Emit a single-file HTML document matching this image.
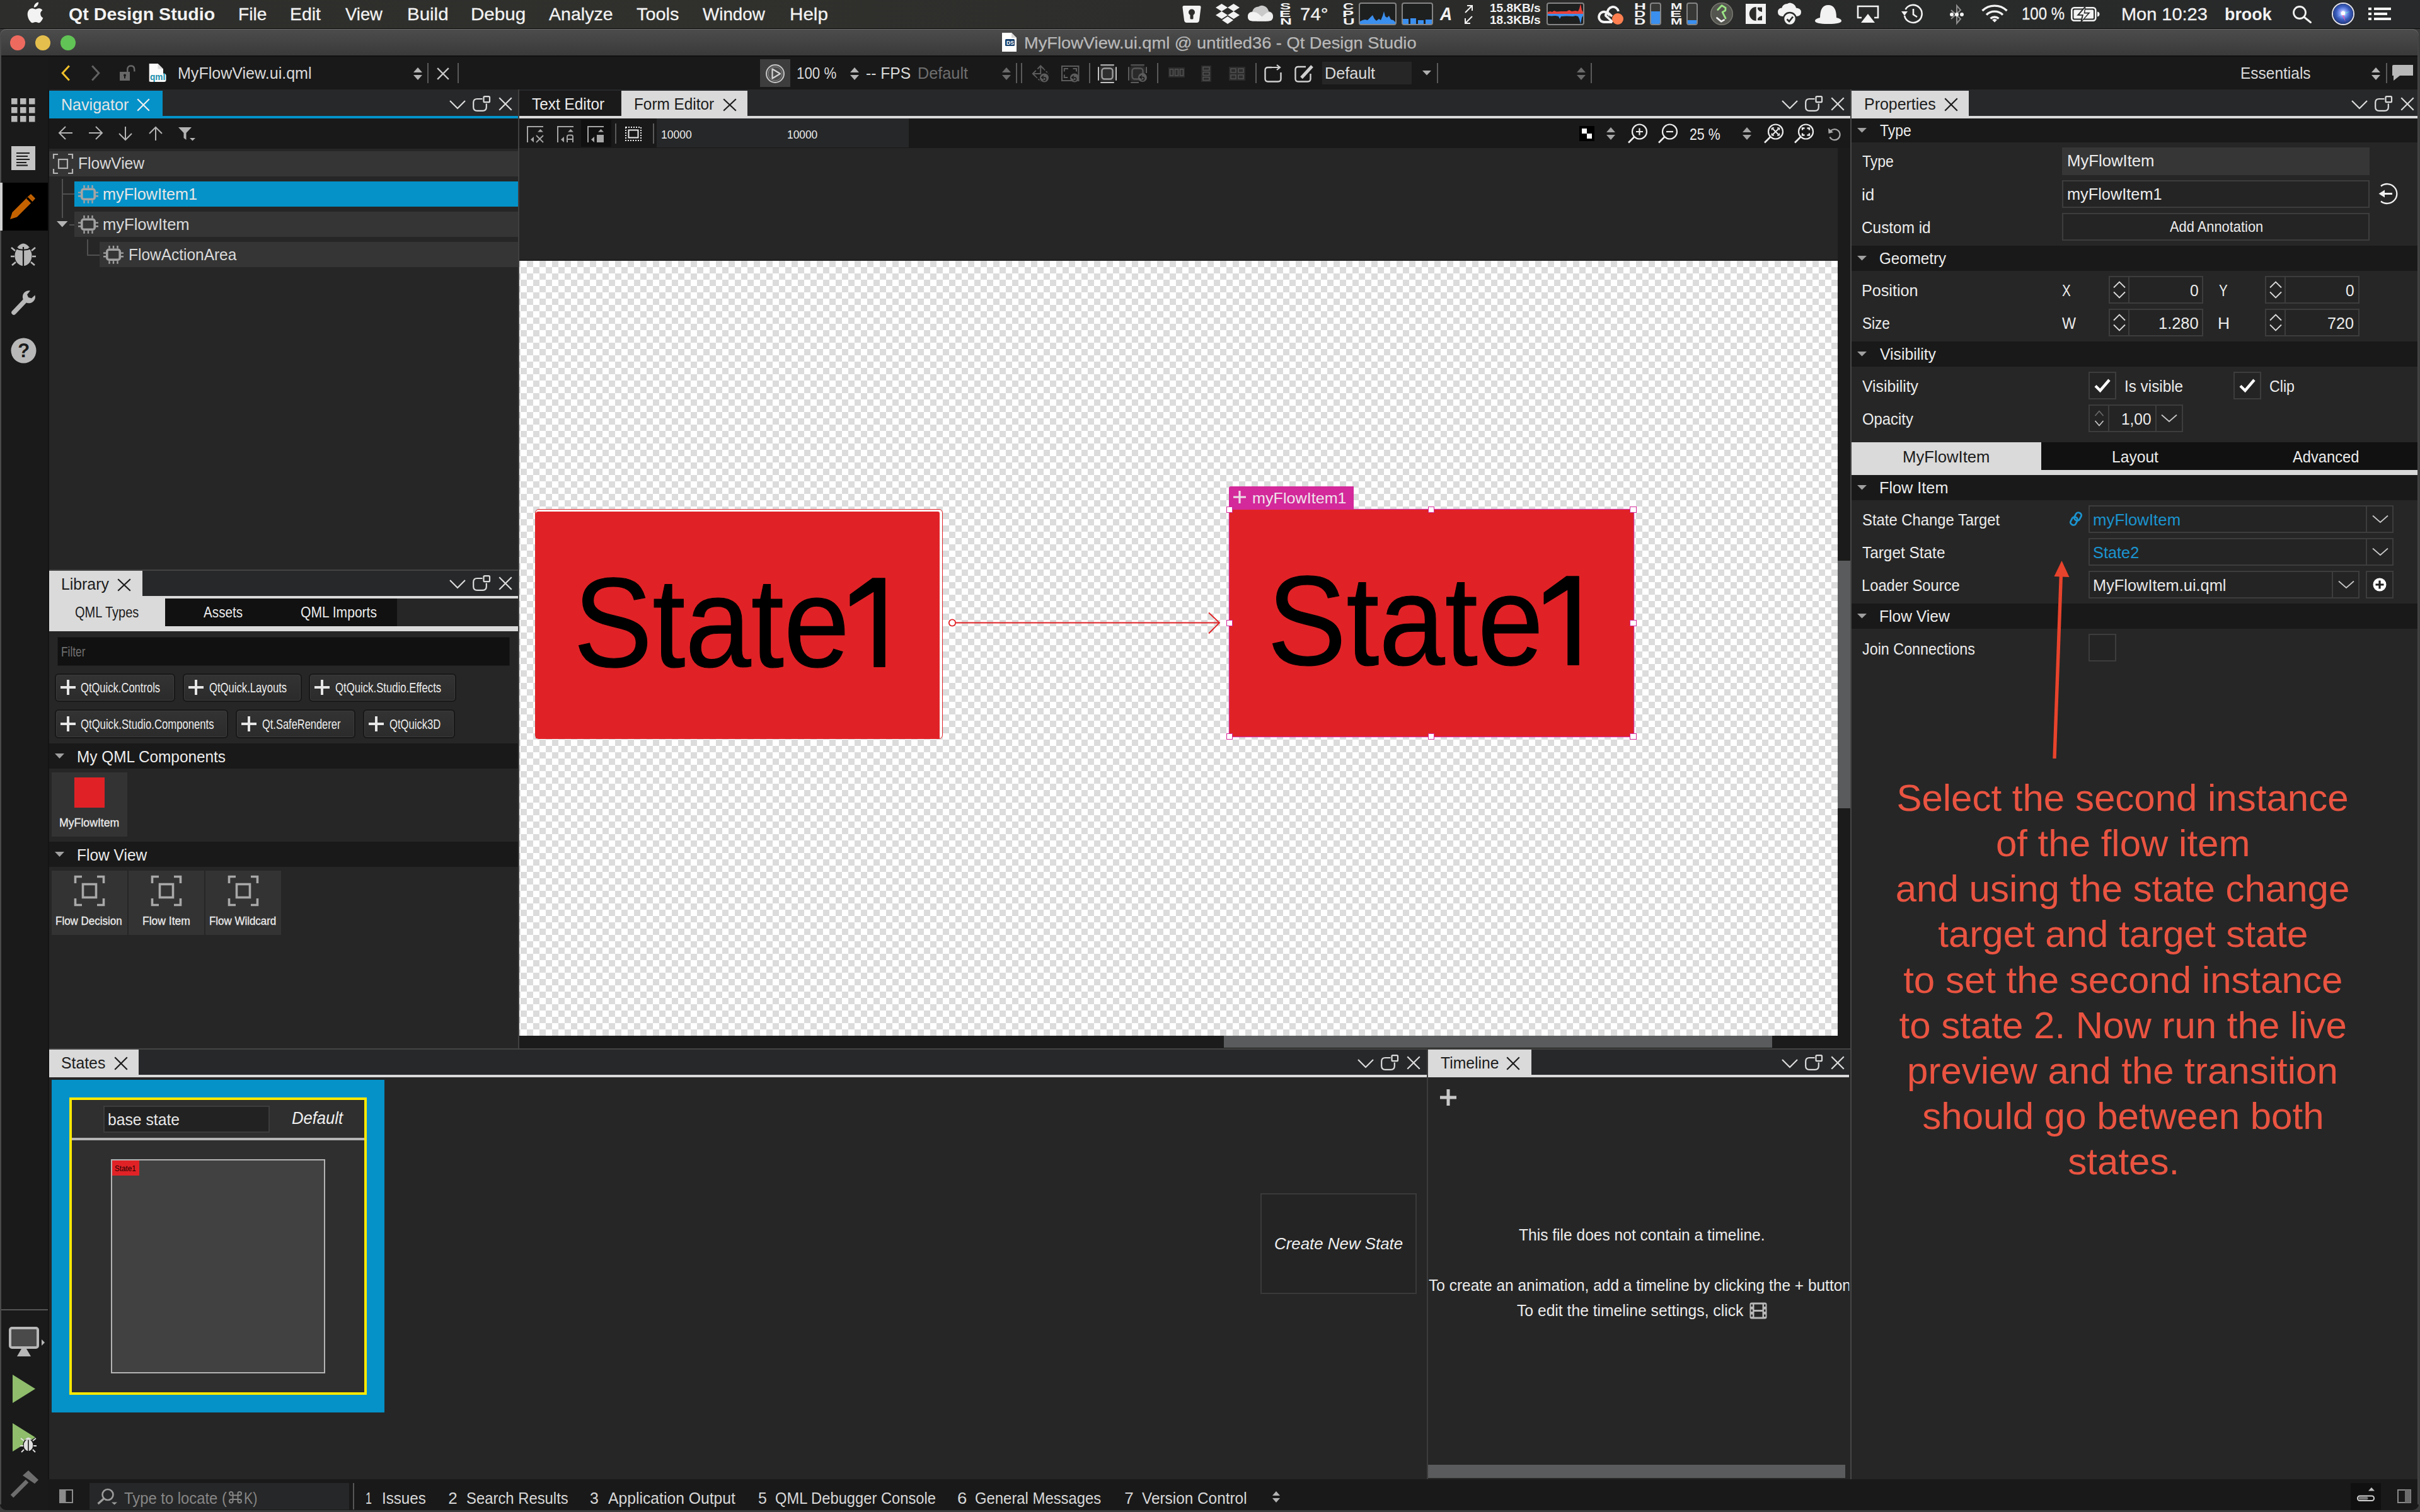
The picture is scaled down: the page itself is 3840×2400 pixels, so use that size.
<!DOCTYPE html>
<html><head><meta charset="utf-8"><title>Qt Design Studio</title>
<style>
html,body{margin:0;padding:0;background:#1b1b1b;}
body{width:3840px;height:2400px;position:relative;overflow:hidden;font-family:"Liberation Sans",sans-serif;}
div,svg,span.t{position:absolute;}
span.t{white-space:pre;display:block;}
svg{overflow:visible;}
</style></head><body>
<div style="left:0px;top:0px;width:3840px;height:2400px;background:#3c3c3c;"></div>
<div style="left:0px;top:46px;width:3838px;height:2351px;background:#262626;border-radius:10px 10px 10px 10px;"></div>
<div style="left:0px;top:0px;width:3840px;height:45px;background:linear-gradient(90deg,#2d2e2b 0%,#30312d 30%,#2b2c2a 60%,#27292a 100%);"></div>
<div style="left:0px;top:45px;width:3840px;height:1px;background:#0c0c0c;"></div>
<div style="left:0px;top:46px;width:3838px;height:43px;background:linear-gradient(180deg,#4c4c4c 0%,#454545 40%,#393939 100%);border-radius:10px 10px 0 0;box-shadow:inset 0 1px 0 #6e6e6e;"></div>
<div style="left:0px;top:88px;width:3838px;height:2px;background:#101010;"></div>
<div style="left:16px;top:56px;width:24px;height:24px;background:#ee6a5f;border-radius:50%;"></div>
<div style="left:56px;top:56px;width:24px;height:24px;background:#e5bf4d;border-radius:50%;"></div>
<div style="left:96px;top:56px;width:24px;height:24px;background:#61c355;border-radius:50%;"></div>
<div style="left:0px;top:90px;width:3838px;height:52px;background:#191919;"></div>
<div style="left:0px;top:90px;width:76px;height:2307px;background:#1a1a1a;border-radius:0 0 0 10px;"></div>
<div style="left:76px;top:142px;width:2px;height:2206px;background:#141414;"></div>
<div style="left:78px;top:142px;width:3760px;height:42px;background:#27282a;"></div>
<div style="left:76px;top:2348px;width:3762px;height:49px;background:#191919;border-radius:0 0 10px 0;"></div>
<svg style="left:42px;top:3px;" width="26" height="33" viewBox="0 0 26 33"><path d="M17.6 5.3c1.2-1.5 2-3.4 1.8-5.3-1.7.1-3.8 1.1-5 2.6-1.1 1.3-2.1 3.3-1.8 5.2 1.9.1 3.8-1 5-2.5zM22.3 17.4c0-3.6 3-5.3 3.1-5.4-1.7-2.5-4.3-2.8-5.2-2.8-2.2-.2-4.3 1.3-5.4 1.300s-2.9-1.3-4.7-1.200c-2.4 0-4.7 1.4-5.9 3.6-2.5 4.4-.600 10.9 1.8 14.4 1.2 1.7 2.6 3.7 4.5 3.6 1.8-.1 2.5-1.2 4.7-1.200s2.8 1.2 4.7 1.100c1.9 0 3.2-1.8 4.4-3.5 1.4-2 1.9-3.9 2-4-.1 0-3.9-1.5-3.9-5.900z" fill="#f2f2f2" transform="translate(-1.5,.5) scale(1.06)"/></svg>
<span class="t" style="left:108.96px;top:8.18px;font-size:28.5px;line-height:28.5px;color:#f2f2f2;transform-origin:0 0;font-weight:bold;transform:scaleX(1.0041);">Qt Design Studio</span>
<span class="t" style="left:377.85px;top:8.18px;font-size:28.5px;line-height:28.5px;color:#f2f2f2;transform-origin:0 0;transform:scaleX(0.9877);-webkit-text-stroke:0.3px #f2f2f2;">File</span>
<span class="t" style="left:459.83px;top:8.18px;font-size:28.5px;line-height:28.5px;color:#f2f2f2;transform-origin:0 0;transform:scaleX(0.9936);-webkit-text-stroke:0.3px #f2f2f2;">Edit</span>
<span class="t" style="left:547.96px;top:8.18px;font-size:28.5px;line-height:28.5px;color:#f2f2f2;transform-origin:0 0;transform:scaleX(0.9618);-webkit-text-stroke:0.3px #f2f2f2;">View</span>
<span class="t" style="left:645.74px;top:8.18px;font-size:28.5px;line-height:28.5px;color:#f2f2f2;transform-origin:0 0;transform:scaleX(1.0341);-webkit-text-stroke:0.3px #f2f2f2;">Build</span>
<span class="t" style="left:747.23px;top:8.18px;font-size:28.5px;line-height:28.5px;color:#f2f2f2;transform-origin:0 0;transform:scaleX(1.0376);-webkit-text-stroke:0.3px #f2f2f2;">Debug</span>
<span class="t" style="left:871.10px;top:8.18px;font-size:28.5px;line-height:28.5px;color:#f2f2f2;transform-origin:0 0;-webkit-text-stroke:0.3px #f2f2f2;">Analyze</span>
<span class="t" style="left:1009.52px;top:8.18px;font-size:28.5px;line-height:28.5px;color:#f2f2f2;transform-origin:0 0;transform:scaleX(1.0126);-webkit-text-stroke:0.3px #f2f2f2;">Tools</span>
<span class="t" style="left:1115.46px;top:8.18px;font-size:28.5px;line-height:28.5px;color:#f2f2f2;transform-origin:0 0;transform:scaleX(0.9752);-webkit-text-stroke:0.3px #f2f2f2;">Window</span>
<span class="t" style="left:1252.73px;top:8.18px;font-size:28.5px;line-height:28.5px;color:#f2f2f2;transform-origin:0 0;transform:scaleX(1.0390);-webkit-text-stroke:0.3px #f2f2f2;">Help</span>
<svg style="left:1876px;top:9px;" width="30" height="27" viewBox="0 0 30 27"><path d="M3 0H27Q30 0 29.5 3L27 23Q26.5 27 23 27H7Q3.5 27 3 23L.5 3Q0 0 3 0Z" fill="#f2f2f2"/><circle cx="15" cy="10.5" r="5" fill="#2c2d2a"/><rect x="12.5" y="12" width="5" height="9.5" rx="1.5" fill="#2c2d2a"/></svg>
<svg style="left:1929px;top:6px;" width="38" height="33" viewBox="0 0 38 33"><g fill="#f2f2f2"><path d="M9.5 0L19 6L9.5 12L0 6Z"/><path d="M28.5 0L38 6L28.5 12L19 6Z"/><path d="M9.5 12L19 18L9.5 24L0 18Z"/><path d="M28.5 12L38 18L28.5 24L19 18Z"/><path d="M19 20L28 26L19 32L10 26Z"/></g></svg>
<svg style="left:1980px;top:8px;" width="40" height="26" viewBox="0 0 40 26"><path d="M8 25.500Q0 25.5 0 18Q0 11 7 10.500Q9 3 17 2.500Q22 -1 28 2.500Q32 5 33 10Q40 11 40 18Q40 25.5 32 25.500Z" fill="#c9c9c9"/><path d="M8 25.500Q0 25.5 0 18.500Q0 13 5.5 11.500Q12 9.5 17 14L30 25.500Z" fill="#f2f2f2"/><path d="M14 25.500L29 13Q34 9.5 38 13.500Q40 16 40 18Q40 25.5 32 25.500Z" fill="#ededed"/></svg>
<span class="t" style="left:2031.47px;top:1.83px;font-size:15.5px;line-height:15.5px;color:#f2f2f2;transform-origin:0 0;font-weight:bold;transform:scaleX(1.6667);">S</span>
<span class="t" style="left:2030.47px;top:13.83px;font-size:15.5px;line-height:15.5px;color:#f2f2f2;transform-origin:0 0;font-weight:bold;transform:scaleX(1.7699);">E</span>
<span class="t" style="left:2030.54px;top:25.83px;font-size:15.5px;line-height:15.5px;color:#f2f2f2;transform-origin:0 0;font-weight:bold;transform:scaleX(1.6949);">N</span>
<span class="t" style="left:2063.12px;top:7.68px;font-size:28.5px;line-height:28.5px;color:#f2f2f2;transform-origin:0 0;transform:scaleX(1.0351);-webkit-text-stroke:0.3px #f2f2f2;">74°</span>
<span class="t" style="left:2131.30px;top:1.83px;font-size:15.5px;line-height:15.5px;color:#f2f2f2;transform-origin:0 0;font-weight:bold;transform:scaleX(1.5267);">C</span>
<span class="t" style="left:2130.48px;top:13.83px;font-size:15.5px;line-height:15.5px;color:#f2f2f2;transform-origin:0 0;font-weight:bold;transform:scaleX(1.7544);">P</span>
<span class="t" style="left:2130.70px;top:25.83px;font-size:15.5px;line-height:15.5px;color:#f2f2f2;transform-origin:0 0;font-weight:bold;transform:scaleX(1.6667);">U</span>
<div style="left:2156px;top:4px;width:60px;height:36px;background:#1e1f1f;border:2px solid #858585;border-radius:4px;box-sizing:border-box;"></div>
<svg style="left:2158px;top:6px;" width="56" height="32" viewBox="0 0 56 32"><path d="M0 32V28L4 26L8 25L12 26L16 22L20 18L23 24L26 27L30 24L33 26L36 19L38 12L40 20L43 22L46 19L49 25L53 26L56 29V32Z" fill="#3b8fee"/></svg>
<div style="left:2224px;top:4px;width:50px;height:36px;background:#1e1f1f;border:2px solid #858585;border-radius:4px;box-sizing:border-box;"></div>
<svg style="left:2226px;top:6px;" width="46" height="32" viewBox="0 0 46 32"><path d="M0 32V24H9V32ZM12 32V23H21V32ZM24 32V26H33V32ZM36 32V25H46V32Z" fill="#3b8fee"/></svg>
<span class="t" style="left:2285.13px;top:7.75px;font-size:29px;line-height:29px;color:#f2f2f2;transform-origin:0 0;font-weight:bold;font-style:italic;transform:scaleX(0.9161);">A</span>
<svg style="left:2324px;top:8px;" width="14" height="30" viewBox="0 0 14 30"><path d="M1 12L12 1M4 1H12V9" stroke="#f2f2f2" stroke-width="2" fill="none"/><path d="M12 18L1 29M9 29H1V21" stroke="#f2f2f2" stroke-width="2" fill="none"/></svg>
<span class="t" style="left:2364.45px;top:4.53px;font-size:17.5px;line-height:17.5px;color:#f2f2f2;transform-origin:0 0;font-weight:bold;transform:scaleX(1.0916);">15.8KB/s</span>
<span class="t" style="left:2364.45px;top:23.52px;font-size:17.5px;line-height:17.5px;color:#f2f2f2;transform-origin:0 0;font-weight:bold;transform:scaleX(1.0916);">18.3KB/s</span>
<div style="left:2454px;top:4px;width:60px;height:36px;background:#1e1f1f;border:2px solid #858585;border-radius:4px;box-sizing:border-box;"></div>
<svg style="left:2456px;top:6px;" width="56" height="32" viewBox="0 0 56 32"><path d="M0 16V13L4 12L7 13L10 11L14 12.500L20 12L30 12L34 10L38 12L44 11L48 12L50 8L52 0L54 10L56 13V16Z" fill="#e8423a"/><path d="M0 16V19L6 19.500L12 19L17 20L19 24L21 20L30 19.500L40 20L44 19L48 20L50 24L52 32L54 22L56 19V16Z" fill="#3b8fee"/></svg>
<svg style="left:2535px;top:8px;" width="44" height="32" viewBox="0 0 44 32"><path d="M23 27H10A8.1 8.1 0 1 1 16 13.2A7 7 0 0 1 33 10" stroke="#f2f2f2" stroke-width="3.8" fill="none"/><path d="M24 27L13 17A3.2 3.2 0 0 1 18 13.5L23 18" stroke="#f2f2f2" stroke-width="3.6" fill="none"/><circle cx="32" cy="22" r="9" fill="#ff7f50"/></svg>
<span class="t" style="left:2592.54px;top:1.83px;font-size:15.5px;line-height:15.5px;color:#f2f2f2;transform-origin:0 0;font-weight:bold;transform:scaleX(1.6949);">H</span>
<span class="t" style="left:2592.61px;top:13.83px;font-size:15.5px;line-height:15.5px;color:#f2f2f2;transform-origin:0 0;font-weight:bold;transform:scaleX(1.6260);">D</span>
<span class="t" style="left:2592.61px;top:25.83px;font-size:15.5px;line-height:15.5px;color:#f2f2f2;transform-origin:0 0;font-weight:bold;transform:scaleX(1.6260);">D</span>
<div style="left:2618px;top:4px;width:18px;height:36px;background:#383937;border:2px solid #858585;border-radius:4px;box-sizing:border-box;"></div>
<div style="left:2620px;top:18px;width:14px;height:20px;background:#3b8fee;border-radius:0 0 2px 2px;"></div>
<span class="t" style="left:2650.81px;top:1.83px;font-size:15.5px;line-height:15.5px;color:#f2f2f2;transform-origin:0 0;font-weight:bold;transform:scaleX(1.4286);">M</span>
<span class="t" style="left:2650.47px;top:13.83px;font-size:15.5px;line-height:15.5px;color:#f2f2f2;transform-origin:0 0;font-weight:bold;transform:scaleX(1.7699);">E</span>
<span class="t" style="left:2650.81px;top:25.83px;font-size:15.5px;line-height:15.5px;color:#f2f2f2;transform-origin:0 0;font-weight:bold;transform:scaleX(1.4286);">M</span>
<div style="left:2676px;top:4px;width:18px;height:36px;background:#383937;border:2px solid #858585;border-radius:4px;box-sizing:border-box;"></div>
<div style="left:2678px;top:32px;width:14px;height:6px;background:#3b8fee;border-radius:0 0 2px 2px;"></div>
<div style="left:2714px;top:4px;width:36px;height:36px;background:#555550;border-radius:50%;box-shadow:inset 0 0 0 1.500px #77776f;"></div>
<svg style="left:2714px;top:4px;" width="36" height="36" viewBox="0 0 36 36"><path d="M11.7 11.5L18.1 4.7L24.1 8.4L23.8 12.7L19.1 15.2L24.1 25.1" stroke="#9be585" stroke-width="2.8" fill="none" stroke-linecap="round" stroke-linejoin="round"/><path d="M10.5 24.5L17.3 30.1L21.6 27.6" stroke="#f2f2f2" stroke-width="2.8" fill="none" stroke-linecap="round" stroke-linejoin="round"/></svg>
<div style="left:2770px;top:6px;width:32px;height:32px;background:#f2f2f2;"></div>
<svg style="left:2770px;top:6px;" width="32" height="32" viewBox="0 0 32 32"><path d="M16.7 5.1V26.9A10.9 10.9 0 0 1 16.7 5.1Z" fill="#2c2d2b"/><path d="M19 5.8H26V13Q21 12 19 8.5ZM19 26.2H26V19Q21 20 19 23.5Z" fill="#2c2d2b"/></svg>
<svg style="left:2821px;top:4px;" width="38" height="37" viewBox="0 0 38 37"><path d="M8 22Q0 22 0 15Q0 9 6.5 8.500Q8 2 15 2Q19 -1 24 2Q28 4 29 8.500Q37 9 37 15.500Q37 22 29 22Z" fill="#f2f2f2"/><circle cx="19" cy="26" r="10" fill="#f2f2f2" stroke="#2a2b2b" stroke-width="2.5"/><path d="M14.5 26.500L18 30L24 22.5" stroke="#2a2b2b" stroke-width="2.8" fill="none"/></svg>
<svg style="left:2880px;top:8px;" width="42" height="30" viewBox="0 0 42 30"><path d="M8 20Q8 0 21 0Q34 0 34 20Q42 22 42 25Q42 30 21 30Q0 30 0 25Q0 22 8 20Z" fill="#f2f2f2"/></svg>
<svg style="left:2946px;top:8px;" width="36" height="28" viewBox="0 0 36 28"><path d="M8 20H2V2H34V20H28" stroke="#f2f2f2" stroke-width="2.6" fill="none"/><path d="M18 14L29 28H7Z" fill="#f2f2f2"/></svg>
<svg style="left:3017px;top:6px;" width="36" height="32" viewBox="0 0 36 32"><path d="M6.5 9A14 14 0 1 1 5 19" stroke="#f2f2f2" stroke-width="2.6" fill="none"/><path d="M0 12H10L5 19Z" fill="#f2f2f2"/><path d="M19 8V17L25 21" stroke="#f2f2f2" stroke-width="2.6" fill="none"/></svg>
<svg style="left:3094px;top:7px;" width="22" height="32" viewBox="0 0 22 32"><path d="M2 9L17 23L11 30V2L17 9L2 23" stroke="#8e8e8e" stroke-width="2" fill="none"/><circle cx="3" cy="16" r="3" fill="#f2f2f2"/><circle cx="11" cy="16" r="3" fill="#f2f2f2"/><circle cx="19" cy="16" r="3" fill="#f2f2f2"/></svg>
<svg style="left:3144px;top:7px;" width="42" height="29" viewBox="0 0 42 29"><g fill="none" stroke="#f2f2f2" stroke-width="3.4"><path d="M1.5 10A28 28 0 0 1 40.5 10"/><path d="M8 16.500A18.5 18.5 0 0 1 34 16.5"/><path d="M14.5 22.500A9.5 9.5 0 0 1 27.5 22.5"/></g><path d="M21 28.500L17 24.500Q21 21.5 25 24.500Z" fill="#f2f2f2"/></svg>
<span class="t" style="left:3207.80px;top:7.18px;font-size:28.5px;line-height:28.5px;color:#f2f2f2;transform-origin:0 0;transform:scaleX(0.8408);-webkit-text-stroke:0.3px #f2f2f2;">100 %</span>
<svg style="left:3286px;top:11px;" width="46" height="23" viewBox="0 0 46 23"><rect x="1.3" y="1.3" width="38" height="20.4" rx="4" stroke="#f2f2f2" stroke-width="2.6" fill="none"/><path d="M42 7.500Q45.5 8 45.5 11.500Q45.5 15 42 15.500Z" fill="#f2f2f2"/><rect x="4.5" y="4.5" width="31.5" height="14" rx="1.5" fill="#f2f2f2"/><path d="M22 1L12 12.500H19L17 22L28 10H21Z" fill="#2a2b2b" stroke="#2a2b2b" stroke-width="2.5"/><path d="M22 2L13.5 12H20L18 21L27 10.500H20.500Z" fill="#f2f2f2"/></svg>
<span class="t" style="left:3365.78px;top:7.68px;font-size:28.5px;line-height:28.5px;color:#f2f2f2;transform-origin:0 0;transform:scaleX(1.0157);-webkit-text-stroke:0.3px #f2f2f2;">Mon 10:23</span>
<span class="t" style="left:3530.35px;top:7.68px;font-size:28.5px;line-height:28.5px;color:#f2f2f2;transform-origin:0 0;font-weight:bold;transform:scaleX(0.9426);">brook</span>
<svg style="left:3638px;top:9px;" width="30" height="28" viewBox="0 0 30 28"><circle cx="11" cy="11" r="9.5" stroke="#f2f2f2" stroke-width="2.8" fill="none"/><path d="M18 18L28.5 26.5" stroke="#f2f2f2" stroke-width="3" stroke-linecap="round"/></svg>
<div style="left:3702px;top:6px;width:32px;height:32px;background:radial-gradient(circle at 50% 46%,#ffffff 0%,#e4ecff 9%,#7f9af2 24%,#3b5fc0 46%,#27408c 68%,#1c2c60 100%);border-radius:50%;box-shadow:0 0 0 2px #e4e4ec;"></div>
<svg style="left:3702px;top:6px;" width="32" height="32" viewBox="0 0 32 32"><path d="M16 15L27 12L17 17Z" fill="#62f0d4" opacity=".8"/><path d="M16 15L20 29L14 17Z" fill="#ff4fa8" opacity=".85"/><path d="M16 15L6 7L15 13Z" fill="#c86cf0" opacity=".8"/><path d="M16 15L5 21L15 17Z" fill="#8fd0ff" opacity=".55"/><circle cx="16" cy="15" r="3.2" fill="#ffffff"/></svg>
<svg style="left:3758px;top:12px;" width="36" height="20" viewBox="0 0 36 20"><path d="M0 0H5V4H0ZM9 0H36V4H9ZM0 8H5V12H0ZM9 8H30V12H9ZM0 16H5V20H0ZM9 16H36V20H9Z" fill="#f2f2f2"/></svg>
<svg style="left:1590px;top:52px;" width="24" height="30" viewBox="0 0 24 30"><path d="M0 0H15L23 8V30H0Z" fill="#ffffff"/><path d="M15 0V8H23Z" fill="#d8d8d8"/><rect x="5" y="10" width="15" height="11" rx="1.5" fill="#17406d"/></svg>
<span class="t" style="left:1596.94px;top:63.32px;font-size:9.5px;line-height:9.5px;color:#ffffff;transform-origin:0 0;font-weight:bold;transform:scaleX(0.9011);">DS</span>
<span class="t" style="left:1625.42px;top:55.30px;font-size:26px;line-height:26px;color:#b9b9b9;transform-origin:0 0;transform:scaleX(1.0484);-webkit-text-stroke:0.25px #b9b9b9;">MyFlowView.ui.qml @ untitled36 - Qt Design Studio</span>
<svg style="left:96px;top:103px;" width="16" height="27" viewBox="0 0 16 27"><path d="M13.8 1.4L3.2 13L13.8 24.6" stroke="#f1c12b" stroke-width="3" fill="none"/></svg>
<svg style="left:144px;top:103px;" width="16" height="27" viewBox="0 0 16 27"><path d="M2.2 1.4L12.8 13L2.2 24.6" stroke="#626262" stroke-width="3" fill="none"/></svg>
<svg style="left:190px;top:103px;" width="25" height="26" viewBox="0 0 25 26"><rect x="0" y="11" width="16" height="14" fill="#686868"/><path d="M12.3 11V7.5Q12.3 1.5 17.8 1.5Q23.3 1.5 23.3 7.5V10.5" stroke="#686868" stroke-width="2.4" fill="none"/><circle cx="8" cy="16.5" r="2" fill="#191919"/><rect x="7" y="17" width="2" height="4.5" fill="#191919"/></svg>
<svg style="left:236px;top:100px;" width="28" height="31" viewBox="0 0 28 31"><path d="M0.7 1H14.5L23 9.5V29.6H0.7Z" fill="#fbfbfb"/><path d="M14.5 1V9.5H23Z" fill="#dcdcdc"/><rect x="1" y="17" width="26.5" height="13" rx="3" fill="#fbfbfb"/></svg>
<span class="t" style="left:238.05px;top:115.11px;font-size:14.7px;line-height:14.7px;color:#1b8fae;transform-origin:0 0;font-weight:bold;transform:scaleX(0.9288);">qml</span>
<span class="t" style="left:281.60px;top:103.30px;font-size:26px;line-height:26px;color:#dadada;transform-origin:0 0;transform:scaleX(0.9635);">MyFlowView.ui.qml</span>
<svg style="left:655.5px;top:106.5px;" width="14" height="20" viewBox="0 0 14 20"><path d="M0 8L7.0 0L14 8Z M0 12H14L7.0 20Z" fill="#b4b4b4"/></svg>
<div style="left:678px;top:100px;width:2px;height:32px;background:#5a5a5a;"></div>
<svg style="left:694px;top:108px;" width="18" height="18" viewBox="0 0 18 18"><path d="M1 1L17 17M17 1L1 17" stroke="#c8c8c8" stroke-width="2.4" fill="none" stroke-linecap="square"/></svg>
<div style="left:726px;top:100px;width:2px;height:32px;background:#5a5a5a;"></div>
<div style="left:1206px;top:94px;width:48px;height:44px;background:#3d3d3d;"></div>
<svg style="left:1214px;top:101px;" width="32" height="32" viewBox="0 0 32 32"><circle cx="16" cy="16" r="14" stroke="#c4c4c4" stroke-width="2" fill="#4c4c4c"/><circle cx="16" cy="16" r="11" stroke="#8a8a8a" stroke-width="1" fill="none"/><path d="M11.5 8.500L24 16L11.5 23.500Z" fill="none" stroke="#d4d4d4" stroke-width="2.2" stroke-linejoin="round"/></svg>
<span class="t" style="left:1264.43px;top:103.30px;font-size:26px;line-height:26px;color:#dadada;transform-origin:0 0;transform:scaleX(0.8582);">100 %</span>
<svg style="left:1349.0px;top:106.5px;" width="14" height="20" viewBox="0 0 14 20"><path d="M0 8L7.0 0L14 8Z M0 12H14L7.0 20Z" fill="#b4b4b4"/></svg>
<span class="t" style="left:1374.49px;top:103.30px;font-size:26px;line-height:26px;color:#dadada;transform-origin:0 0;transform:scaleX(0.9467);">-- FPS</span>
<span class="t" style="left:1455.58px;top:103.30px;font-size:26px;line-height:26px;color:#6e6e6e;transform-origin:0 0;transform:scaleX(0.9715);">Default</span>
<svg style="left:1589.5px;top:106.5px;" width="14" height="20" viewBox="0 0 14 20"><path d="M0 8L7.0 0L14 8Z M0 12H14L7.0 20Z" fill="#6a6a6a"/></svg>
<div style="left:1612px;top:100px;width:2px;height:32px;background:#5a5a5a;"></div>
<div style="left:1620px;top:100px;width:2px;height:32px;background:#5a5a5a;"></div>
<div style="left:1728px;top:100px;width:2px;height:32px;background:#5a5a5a;"></div>
<div style="left:1836px;top:100px;width:2px;height:32px;background:#5a5a5a;"></div>
<div style="left:1992px;top:100px;width:2px;height:32px;background:#5a5a5a;"></div>
<div style="left:2280px;top:100px;width:2px;height:32px;background:#5a5a5a;"></div>
<div style="left:2524px;top:100px;width:2px;height:32px;background:#5a5a5a;"></div>
<svg style="left:1638px;top:102px;" width="28" height="30" viewBox="0 0 28 30"><path d="M13.2 2.5V14.9H0.8M8.3 7.5L13.2 2.5L18.2 7.5M5.8 10L0.8 14.9L5.8 19.9" stroke="#5c5c5c" stroke-width="2" fill="none"/><path d="M18.2 7.5L25.6 14.9M5.8 19.9L13.2 27.3" stroke="#5c5c5c" stroke-width="1.6" stroke-dasharray="3 2" fill="none"/><circle cx="19" cy="21.5" r="7" fill="#5c5c5c"/><path d="M15.8 21.0H20.2A2.6 2.6 0 0 1 20.2 25.7H17.5" stroke="#191919" stroke-width="1.5" fill="none"/><path d="M18 18.3L14.8 21.0L18 23.7" stroke="#191919" stroke-width="1.5" fill="none"/></svg>
<svg style="left:1684px;top:104px;" width="29" height="28" viewBox="0 0 29 28"><rect x="1" y="1" width="26.5" height="23" stroke="#5c5c5c" stroke-width="2" fill="none"/><path d="M4.8 9.6V4.9H11M18.5 4.9H24V9.6M4.8 14.6V19H10.2" stroke="#5c5c5c" stroke-width="2" fill="none"/><circle cx="21" cy="19.5" r="7" fill="#5c5c5c"/><path d="M17.8 19.0H22.2A2.6 2.6 0 0 1 22.2 23.7H19.5" stroke="#191919" stroke-width="1.5" fill="none"/><path d="M20 16.3L16.8 19.0L20 21.7" stroke="#191919" stroke-width="1.5" fill="none"/></svg>
<svg style="left:1742px;top:102px;" width="30" height="30" viewBox="0 0 30 30"><rect x="3" y="3" width="24" height="24" rx="4" fill="#2e2e2e"/><path d="M4.3 1.2H25.8M4.3 29H25.8" stroke="#c4c4c4" stroke-width="2"/><path d="M1 4.2V25.7M29 4.2V25.7" stroke="#c4c4c4" stroke-width="2"/><rect x="6.5" y="6.5" width="17" height="17" rx="4" stroke="#9c9c9c" stroke-width="2.4" fill="none"/></svg>
<svg style="left:1790px;top:102px;" width="32" height="30" viewBox="0 0 32 30"><rect x="3" y="3" width="24" height="24" rx="4" fill="#2a2a2a"/><path d="M4.3 1.2H25.8M4.3 29H17" stroke="#5c5c5c" stroke-width="2"/><path d="M1 4.2V25.7M29 4.2V14" stroke="#5c5c5c" stroke-width="2"/><rect x="6.5" y="6.5" width="17" height="17" rx="4" stroke="#555" stroke-width="2.4" fill="none"/><circle cx="22.9" cy="21" r="7" fill="#5c5c5c"/><path d="M19.7 20.5H24.099999999999998A2.6 2.6 0 0 1 24.099999999999998 25.2H21.4" stroke="#191919" stroke-width="1.5" fill="none"/><path d="M21.9 17.8L18.7 20.5L21.9 23.2" stroke="#191919" stroke-width="1.5" fill="none"/></svg>
<svg style="left:1854px;top:107px;" width="26" height="16" viewBox="0 0 26 16"><rect width="26" height="16" fill="#2c2c2c"/><path d="M2.5 3H7.500V13H2.500ZM10.5 3H15.500V13H10.500ZM18.5 3H23.500V13H18.500Z" stroke="#525252" stroke-width="1.5" fill="none"/></svg>
<svg style="left:1906px;top:104px;" width="16" height="26" viewBox="0 0 16 26"><rect width="16" height="26" fill="#2c2c2c"/><path d="M3 2.500H13V7.500H3ZM3 10.500H13V15.500H3ZM3 18.500H13V23.500H3Z" stroke="#525252" stroke-width="1.5" fill="none"/></svg>
<svg style="left:1950px;top:106px;" width="26" height="22" viewBox="0 0 26 22"><rect width="26" height="22" fill="#2c2c2c"/><path d="M3 3H11V9H3ZM15 3H23V9H15ZM3 13H11V19H3ZM15 13H23V19H15Z" stroke="#525252" stroke-width="1.5" fill="none"/></svg>
<svg style="left:2006px;top:102px;" width="29" height="29" viewBox="0 0 29 29"><path d="M12 5H6Q1.5 5 1.5 9.500V23Q1.5 27.5 6 27.500H22Q26.5 27.5 26.5 23V13" stroke="#d0d0d0" stroke-width="2.4" fill="none"/><path d="M5 5H25M20 1L25 5L20 9" stroke="#d0d0d0" stroke-width="2.2" fill="none"/></svg>
<svg style="left:2054px;top:102px;" width="31" height="29" viewBox="0 0 31 29"><path d="M18 4H6Q1.5 4 1.5 8.500V23Q1.5 27.5 6 27.500H21Q25.5 27.5 25.5 23V15" stroke="#d0d0d0" stroke-width="2.4" fill="none"/><path d="M11 21.500L28 3" stroke="#d0d0d0" stroke-width="5"/></svg>
<div style="left:2098px;top:98px;width:142px;height:36px;background:#262626;"></div>
<span class="t" style="left:2101.58px;top:103.30px;font-size:26px;line-height:26px;color:#dadada;transform-origin:0 0;transform:scaleX(0.9715);">Default</span>
<svg style="left:2257px;top:112px;" width="14" height="7.5" viewBox="0 0 14 7.5"><path d="M0 0H14L7.0 7.5Z" fill="#b0b0b0"/></svg>
<svg style="left:2501.5px;top:106.5px;" width="14" height="20" viewBox="0 0 14 20"><path d="M0 8L7.0 0L14 8Z M0 12H14L7.0 20Z" fill="#6a6a6a"/></svg>
<span class="t" style="left:3554.64px;top:103.30px;font-size:26px;line-height:26px;color:#dadada;transform-origin:0 0;transform:scaleX(0.9414);">Essentials</span>
<svg style="left:3763.0px;top:106.5px;" width="14" height="20" viewBox="0 0 14 20"><path d="M0 8L7.0 0L14 8Z M0 12H14L7.0 20Z" fill="#b4b4b4"/></svg>
<div style="left:3786px;top:100px;width:2px;height:32px;background:#5a5a5a;"></div>
<svg style="left:3796px;top:103px;" width="33" height="26" viewBox="0 0 33 26"><path d="M2 0H33V17H12L2 25V17H0V2Q0 0 2 0Z" fill="#b8b8b8"/></svg>
<div style="left:78px;top:144px;width:180px;height:40px;background:#0492c9;"></div>
<div style="left:78px;top:184px;width:744px;height:4px;background:#0492c9;"></div>
<span class="t" style="left:96.59px;top:153.30px;font-size:26px;line-height:26px;color:#e4e4e4;transform-origin:0 0;transform:scaleX(0.9643);">Navigator</span>
<svg style="left:218px;top:157px;" width="19" height="19" viewBox="0 0 19 19"><path d="M1 1L18 18M18 1L1 18" stroke="#f0f0f0" stroke-width="2.2" fill="none" stroke-linecap="square"/></svg>
<svg style="left:713px;top:159px;" width="26" height="14" viewBox="0 0 26 14"><path d="M1 1L13.0 13L25 1" stroke="#dcdcdc" stroke-width="2.2" fill="none"/></svg>
<svg style="left:750px;top:152px;" width="29" height="25" viewBox="0 0 29 25"><path d="M15.5 5H7Q1.2 5 1.2 11V18Q1.2 23.8 7 23.8H16Q21.8 23.8 21.8 18V12.5" stroke="#dcdcdc" stroke-width="2.2" fill="none"/><rect x="17.5" y="1.2" width="9.5" height="9" rx="1.5" stroke="#dcdcdc" stroke-width="2.2" fill="none"/></svg>
<svg style="left:792px;top:155px;" width="20" height="20" viewBox="0 0 20 20"><path d="M1 1L19 19M19 1L1 19" stroke="#dcdcdc" stroke-width="2.2" fill="none" stroke-linecap="square"/></svg>
<div style="left:78px;top:188px;width:744px;height:48px;background:#191919;"></div>
<svg style="left:92px;top:199px;" width="24" height="24" viewBox="0 0 24 24"><path d="M23 12H2M12 2L2 12L12 22" stroke="#b4b4b4" stroke-width="2" fill="none"/></svg>
<svg style="left:140px;top:199px;" width="24" height="24" viewBox="0 0 24 24"><path d="M1 12H22M12 2L22 12L12 22" stroke="#b4b4b4" stroke-width="2" fill="none"/></svg>
<svg style="left:187px;top:200px;" width="24" height="24" viewBox="0 0 24 24"><path d="M12 1V22M2 12L12 22L22 12" stroke="#b4b4b4" stroke-width="2" fill="none"/></svg>
<svg style="left:235px;top:200px;" width="24" height="24" viewBox="0 0 24 24"><path d="M12 23V2M2 12L12 2L22 12" stroke="#b4b4b4" stroke-width="2" fill="none"/></svg>
<svg style="left:283px;top:202px;" width="28" height="22" viewBox="0 0 28 22"><path d="M0 0H21L12.5 9V20L8.5 17V9Z" fill="#b4b4b4"/><path d="M18 17H27L22.5 21.5Z" fill="#b4b4b4"/></svg>
<div style="left:78px;top:240px;width:744px;height:40px;background:#353535;"></div>
<div style="left:118px;top:288px;width:704px;height:40px;background:#0492c9;"></div>
<div style="left:118px;top:336px;width:704px;height:40px;background:#353535;"></div>
<div style="left:158px;top:384px;width:664px;height:40px;background:#353535;"></div>
<svg style="left:84px;top:244px;" width="32" height="32" viewBox="0 0 32 32"><g transform="scale(1.0)" stroke="#b4b4b4" stroke-width="2.2" fill="none"><path d="M1 8V1H8M24 1H31V8M31 24V31H24M8 31H1V24"/><rect x="9" y="9" width="14" height="14"/></g></svg>
<span class="t" style="left:123.63px;top:246.00px;font-size:26px;line-height:26px;color:#dadada;transform-origin:0 0;transform:scaleX(0.9494);">FlowView</span>
<svg style="left:124px;top:294px;" width="32" height="29" viewBox="0 0 32 29"><rect x="5.8" y="6.3" width="20.4" height="15.9" rx="3" stroke="#a4a4a4" stroke-width="3.6" fill="none"/><path d="M9.5 0V4.5M16 0V4.5M22.5 0V4.5M9.5 24.2V28.7M16 24.2V28.7M22.5 24.2V28.7M0 11.6H4M0 17.2H4M28 11.6H32M28 17.2H32" stroke="#a4a4a4" stroke-width="2.4"/></svg>
<span class="t" style="left:163.46px;top:294.50px;font-size:26px;line-height:26px;color:#e6e6e6;transform-origin:0 0;transform:scaleX(0.9709);">myFlowItem1</span>
<svg style="left:124px;top:342px;" width="32" height="29" viewBox="0 0 32 29"><rect x="5.8" y="6.3" width="20.4" height="15.9" rx="3" stroke="#a0a0a0" stroke-width="3.6" fill="none"/><path d="M9.5 0V4.5M16 0V4.5M22.5 0V4.5M9.5 24.2V28.7M16 24.2V28.7M22.5 24.2V28.7M0 11.6H4M0 17.2H4M28 11.6H32M28 17.2H32" stroke="#a0a0a0" stroke-width="2.4"/></svg>
<span class="t" style="left:163.44px;top:342.50px;font-size:26px;line-height:26px;color:#dadada;transform-origin:0 0;transform:scaleX(0.9820);">myFlowItem</span>
<svg style="left:164px;top:390px;" width="32" height="29" viewBox="0 0 32 29"><rect x="5.8" y="6.3" width="20.4" height="15.9" rx="3" stroke="#a0a0a0" stroke-width="3.6" fill="none"/><path d="M9.5 0V4.5M16 0V4.5M22.5 0V4.5M9.5 24.2V28.7M16 24.2V28.7M22.5 24.2V28.7M0 11.6H4M0 17.2H4M28 11.6H32M28 17.2H32" stroke="#a0a0a0" stroke-width="2.4"/></svg>
<span class="t" style="left:203.64px;top:390.50px;font-size:26px;line-height:26px;color:#dadada;transform-origin:0 0;transform:scaleX(0.9410);">FlowActionArea</span>
<div style="left:98px;top:284px;width:2px;height:62px;background:#505050;"></div>
<div style="left:98px;top:307px;width:20px;height:2px;background:#505050;"></div>
<div style="left:110px;top:356px;width:8px;height:2px;background:#505050;"></div>
<div style="left:138px;top:380px;width:2px;height:26px;background:#505050;"></div>
<div style="left:138px;top:404px;width:20px;height:2px;background:#505050;"></div>
<svg style="left:89.5px;top:351px;" width="17.5" height="9.5" viewBox="0 0 17.5 9.5"><path d="M0 0H17.5L8.75 9.5Z" fill="#b4b4b4"/></svg>
<div style="left:78px;top:904px;width:744px;height:2px;background:#444444;"></div>
<div style="left:78px;top:906px;width:744px;height:40px;background:#27282a;"></div>
<div style="left:78px;top:906px;width:148px;height:40px;background:#dadada;"></div>
<div style="left:78px;top:946px;width:744px;height:4px;background:#dadada;"></div>
<span class="t" style="left:96.62px;top:914.30px;font-size:26px;line-height:26px;color:#1c1c1c;transform-origin:0 0;transform:scaleX(0.9541);">Library</span>
<svg style="left:187px;top:919px;" width="20" height="19" viewBox="0 0 20 19"><path d="M1 1L19 18M19 1L1 18" stroke="#1c1c1c" stroke-width="2.2" fill="none" stroke-linecap="square"/></svg>
<svg style="left:713px;top:920px;" width="26" height="14" viewBox="0 0 26 14"><path d="M1 1L13.0 13L25 1" stroke="#dcdcdc" stroke-width="2.2" fill="none"/></svg>
<svg style="left:750px;top:913px;" width="29" height="25" viewBox="0 0 29 25"><path d="M15.5 5H7Q1.2 5 1.2 11V18Q1.2 23.8 7 23.8H16Q21.8 23.8 21.8 18V12.5" stroke="#dcdcdc" stroke-width="2.2" fill="none"/><rect x="17.5" y="1.2" width="9.5" height="9" rx="1.5" stroke="#dcdcdc" stroke-width="2.2" fill="none"/></svg>
<svg style="left:792px;top:916px;" width="20" height="20" viewBox="0 0 20 20"><path d="M1 1L19 19M19 1L1 19" stroke="#dcdcdc" stroke-width="2.2" fill="none" stroke-linecap="square"/></svg>
<div style="left:78px;top:950px;width:184px;height:44px;background:#dadada;"></div>
<div style="left:262px;top:950px;width:368px;height:44px;background:#111111;"></div>
<div style="left:78px;top:994px;width:744px;height:8px;background:#dadada;"></div>
<span class="t" style="left:118.70px;top:960.00px;font-size:24px;line-height:24px;color:#1c1c1c;transform-origin:0 0;transform:scaleX(0.8350);">QML Types</span>
<span class="t" style="left:323.10px;top:960.00px;font-size:24px;line-height:24px;color:#ececec;transform-origin:0 0;transform:scaleX(0.8614);">Assets</span>
<span class="t" style="left:477.15px;top:960.00px;font-size:24px;line-height:24px;color:#ececec;transform-origin:0 0;transform:scaleX(0.8782);">QML Imports</span>
<div style="left:92px;top:1012px;width:716px;height:44px;background:#111111;box-shadow:0 0 0 1px #1c1c1c;"></div>
<span class="t" style="left:97.21px;top:1024.30px;font-size:22px;line-height:22px;color:#707070;transform-origin:0 0;transform:scaleX(0.7872);">Filter</span>
<div style="left:86.5px;top:1069px;width:191.0px;height:45px;background:linear-gradient(180deg,#333333,#2b2b2b);border:2px solid #181818;border-radius:6px;box-sizing:border-box;box-shadow:inset 0 0 0 1px #3b3b3b;"></div>
<svg style="left:96px;top:1079.0px;" width="24" height="24" viewBox="0 0 24 24"><path d="M12.0 0V24M0 12.0H24" stroke="#e6e6e6" stroke-width="4" fill="none"/></svg>
<span class="t" style="left:127.85px;top:1080.70px;font-size:22px;line-height:22px;color:#ececec;transform-origin:0 0;transform:scaleX(0.7529);">QtQuick.Controls</span>
<div style="left:289.5px;top:1069px;width:189.0px;height:45px;background:linear-gradient(180deg,#333333,#2b2b2b);border:2px solid #181818;border-radius:6px;box-sizing:border-box;box-shadow:inset 0 0 0 1px #3b3b3b;"></div>
<svg style="left:299px;top:1079.0px;" width="24" height="24" viewBox="0 0 24 24"><path d="M12.0 0V24M0 12.0H24" stroke="#e6e6e6" stroke-width="4" fill="none"/></svg>
<span class="t" style="left:331.85px;top:1080.70px;font-size:22px;line-height:22px;color:#ececec;transform-origin:0 0;transform:scaleX(0.7574);">QtQuick.Layouts</span>
<div style="left:489.5px;top:1069px;width:234.0px;height:45px;background:linear-gradient(180deg,#333333,#2b2b2b);border:2px solid #181818;border-radius:6px;box-sizing:border-box;box-shadow:inset 0 0 0 1px #3b3b3b;"></div>
<svg style="left:499px;top:1079.0px;" width="24" height="24" viewBox="0 0 24 24"><path d="M12.0 0V24M0 12.0H24" stroke="#e6e6e6" stroke-width="4" fill="none"/></svg>
<span class="t" style="left:531.85px;top:1080.70px;font-size:22px;line-height:22px;color:#ececec;transform-origin:0 0;transform:scaleX(0.7612);">QtQuick.Studio.Effects</span>
<div style="left:86.5px;top:1126px;width:275.0px;height:46px;background:linear-gradient(180deg,#333333,#2b2b2b);border:2px solid #181818;border-radius:6px;box-sizing:border-box;box-shadow:inset 0 0 0 1px #3b3b3b;"></div>
<svg style="left:96px;top:1136.5px;" width="24" height="24" viewBox="0 0 24 24"><path d="M12.0 0V24M0 12.0H24" stroke="#e6e6e6" stroke-width="4" fill="none"/></svg>
<span class="t" style="left:127.85px;top:1138.70px;font-size:22px;line-height:22px;color:#ececec;transform-origin:0 0;transform:scaleX(0.7590);">QtQuick.Studio.Components</span>
<div style="left:373.5px;top:1126px;width:190.0px;height:46px;background:linear-gradient(180deg,#333333,#2b2b2b);border:2px solid #181818;border-radius:6px;box-sizing:border-box;box-shadow:inset 0 0 0 1px #3b3b3b;"></div>
<svg style="left:383px;top:1136.5px;" width="24" height="24" viewBox="0 0 24 24"><path d="M12.0 0V24M0 12.0H24" stroke="#e6e6e6" stroke-width="4" fill="none"/></svg>
<span class="t" style="left:415.86px;top:1138.70px;font-size:22px;line-height:22px;color:#ececec;transform-origin:0 0;transform:scaleX(0.7478);">Qt.SafeRenderer</span>
<div style="left:575.5px;top:1126px;width:146.0px;height:46px;background:linear-gradient(180deg,#333333,#2b2b2b);border:2px solid #181818;border-radius:6px;box-sizing:border-box;box-shadow:inset 0 0 0 1px #3b3b3b;"></div>
<svg style="left:585px;top:1136.5px;" width="24" height="24" viewBox="0 0 24 24"><path d="M12.0 0V24M0 12.0H24" stroke="#e6e6e6" stroke-width="4" fill="none"/></svg>
<span class="t" style="left:617.85px;top:1138.70px;font-size:22px;line-height:22px;color:#ececec;transform-origin:0 0;transform:scaleX(0.7557);">QtQuick3D</span>
<div style="left:78px;top:1180px;width:744px;height:40px;background:#191919;"></div>
<svg style="left:87px;top:1196px;" width="15" height="8" viewBox="0 0 15 8"><path d="M0 0H15L7.5 8Z" fill="#a0a0a0"/></svg>
<span class="t" style="left:121.65px;top:1188.30px;font-size:26px;line-height:26px;color:#ececec;transform-origin:0 0;transform:scaleX(0.9371);">My QML Components</span>
<div style="left:82px;top:1226px;width:120px;height:102px;background:#333333;"></div>
<div style="left:118px;top:1234px;width:48px;height:48px;background:#e02226;"></div>
<span class="t" style="left:94.18px;top:1297.28px;font-size:18.5px;line-height:18.5px;color:#ececec;transform-origin:0 0;transform:scaleX(0.9564);-webkit-text-stroke:0.3px #ececec;">MyFlowItem</span>
<div style="left:78px;top:1336px;width:744px;height:40px;background:#191919;"></div>
<svg style="left:87px;top:1352px;" width="15" height="8" viewBox="0 0 15 8"><path d="M0 0H15L7.5 8Z" fill="#a0a0a0"/></svg>
<span class="t" style="left:121.64px;top:1344.30px;font-size:26px;line-height:26px;color:#ececec;transform-origin:0 0;transform:scaleX(0.9426);">Flow View</span>
<div style="left:82px;top:1382px;width:120px;height:102px;background:#333333;"></div>
<svg style="left:118px;top:1390px;" width="48" height="48" viewBox="0 0 48 48"><g transform="scale(1.5)" stroke="#a8a8a8" stroke-width="2.4" fill="none"><path d="M1 8V1H8M24 1H31V8M31 24V31H24M8 31H1V24"/><rect x="9" y="9" width="14" height="14"/></g></svg>
<span class="t" style="left:88.24px;top:1452.68px;font-size:18.5px;line-height:18.5px;color:#ececec;transform-origin:0 0;transform:scaleX(0.9184);-webkit-text-stroke:0.3px #ececec;">Flow Decision</span>
<div style="left:204px;top:1382px;width:120px;height:102px;background:#333333;"></div>
<svg style="left:240px;top:1390px;" width="48" height="48" viewBox="0 0 48 48"><g transform="scale(1.5)" stroke="#a8a8a8" stroke-width="2.4" fill="none"><path d="M1 8V1H8M24 1H31V8M31 24V31H24M8 31H1V24"/><rect x="9" y="9" width="14" height="14"/></g></svg>
<span class="t" style="left:225.70px;top:1452.68px;font-size:18.5px;line-height:18.5px;color:#ececec;transform-origin:0 0;transform:scaleX(0.9456);-webkit-text-stroke:0.3px #ececec;">Flow Item</span>
<div style="left:326px;top:1382px;width:120px;height:102px;background:#333333;"></div>
<svg style="left:362px;top:1390px;" width="48" height="48" viewBox="0 0 48 48"><g transform="scale(1.5)" stroke="#a8a8a8" stroke-width="2.4" fill="none"><path d="M1 8V1H8M24 1H31V8M31 24V31H24M8 31H1V24"/><rect x="9" y="9" width="14" height="14"/></g></svg>
<span class="t" style="left:332.25px;top:1452.68px;font-size:18.5px;line-height:18.5px;color:#ececec;transform-origin:0 0;transform:scaleX(0.9146);-webkit-text-stroke:0.3px #ececec;">Flow Wildcard</span>
<div style="left:822px;top:142px;width:2px;height:1522px;background:#404040;"></div>
<div style="left:824px;top:144px;width:161px;height:40px;background:#1a1a1a;"></div>
<div style="left:986px;top:144px;width:200px;height:40px;background:#dadada;"></div>
<div style="left:824px;top:184px;width:2112px;height:4px;background:#dadada;"></div>
<span class="t" style="left:844.11px;top:152.00px;font-size:26px;line-height:26px;color:#ececec;transform-origin:0 0;transform:scaleX(0.9383);">Text Editor</span>
<span class="t" style="left:1005.65px;top:152.00px;font-size:26px;line-height:26px;color:#1c1c1c;transform-origin:0 0;transform:scaleX(0.9366);">Form Editor</span>
<svg style="left:1148px;top:157px;" width="20" height="19" viewBox="0 0 20 19"><path d="M1 1L19 18M19 1L1 18" stroke="#1c1c1c" stroke-width="2.2" fill="none" stroke-linecap="square"/></svg>
<svg style="left:2827px;top:159px;" width="26" height="14" viewBox="0 0 26 14"><path d="M1 1L13.0 13L25 1" stroke="#dcdcdc" stroke-width="2.2" fill="none"/></svg>
<svg style="left:2864px;top:152px;" width="29" height="25" viewBox="0 0 29 25"><path d="M15.5 5H7Q1.2 5 1.2 11V18Q1.2 23.8 7 23.8H16Q21.8 23.8 21.8 18V12.5" stroke="#dcdcdc" stroke-width="2.2" fill="none"/><rect x="17.5" y="1.2" width="9.5" height="9" rx="1.5" stroke="#dcdcdc" stroke-width="2.2" fill="none"/></svg>
<svg style="left:2906px;top:155px;" width="20" height="20" viewBox="0 0 20 20"><path d="M1 1L19 19M19 1L1 19" stroke="#dcdcdc" stroke-width="2.2" fill="none" stroke-linecap="square"/></svg>
<div style="left:824px;top:188px;width:2112px;height:47px;background:#191919;"></div>
<div style="left:922px;top:190px;width:48px;height:43px;background:#101010;"></div>
<div style="left:1042px;top:188px;width:400px;height:46px;background:#262728;"></div>
<svg style="left:836px;top:200px;" width="27" height="27" viewBox="0 0 27 27"><path d="M1 26V1H26" stroke="#a6a6a6" stroke-width="2" fill="none"/><path d="M6 21.5L11 17V26Z" fill="#a6a6a6"/><path d="M17 9.5L21.5 5L26 9.5Z" fill="#a6a6a6"/><path d="M15 15L26 26M26 15L15 26" stroke="#a6a6a6" stroke-width="1.8"/></svg>
<svg style="left:884px;top:200px;" width="27" height="27" viewBox="0 0 27 27"><path d="M1 26V1H26" stroke="#a6a6a6" stroke-width="2" fill="none"/><path d="M6 21.5L11 17V26Z" fill="#a6a6a6"/><path d="M17 9.5L21.5 5L26 9.5Z" fill="#a6a6a6"/><path d="M16 26V17Q16 14.5 18.5 14.5H22.5Q25 14.5 25 17V26M16 21H25" stroke="#a6a6a6" stroke-width="2" fill="none"/></svg>
<svg style="left:932px;top:200px;" width="27" height="27" viewBox="0 0 27 27"><path d="M1 26V1H26" stroke="#a6a6a6" stroke-width="2" fill="none"/><path d="M6 21.5L11 17V26Z" fill="#a6a6a6"/><path d="M17 9.5L21.5 5L26 9.5Z" fill="#a6a6a6"/><rect x="15" y="14" width="11" height="12" fill="#a6a6a6"/></svg>
<div style="left:976px;top:196px;width:2px;height:32px;background:#5a5a5a;"></div>
<div style="left:1036px;top:196px;width:2px;height:32px;background:#5a5a5a;"></div>
<svg style="left:992px;top:201px;" width="26" height="23" viewBox="0 0 26 23"><rect x="1" y="1" width="24" height="21" stroke="#ececec" stroke-width="2" stroke-dasharray="2 2" fill="none"/><rect x="5.5" y="5.5" width="15" height="12" stroke="#ececec" stroke-width="2" fill="none"/></svg>
<span class="t" style="left:1048.79px;top:203.95px;font-size:19px;line-height:19px;color:#ececec;transform-origin:0 0;transform:scaleX(0.9225);">10000</span>
<span class="t" style="left:1249.30px;top:203.95px;font-size:19px;line-height:19px;color:#ececec;transform-origin:0 0;transform:scaleX(0.9127);">10000</span>
<div style="left:2506px;top:200px;width:24px;height:24px;background:#000000;"></div>
<div style="left:2510px;top:204px;width:8px;height:8px;background:#ffffff;"></div>
<div style="left:2518px;top:212px;width:8px;height:8px;background:#ffffff;"></div>
<svg style="left:2549.0px;top:202.0px;" width="14" height="20" viewBox="0 0 14 20"><path d="M0 8L7.0 0L14 8Z M0 12H14L7.0 20Z" fill="#a4a4a4"/></svg>
<svg style="left:2583px;top:196px;" width="31" height="32" viewBox="0 0 31 32"><circle cx="18.5" cy="13" r="11.5" stroke="#ececec" stroke-width="2.2" fill="none"/><path d="M10 21.5L1 30.5" stroke="#ececec" stroke-width="2.6"/><path d="M18.5 7.5V18.5M13 13H24" stroke="#ececec" stroke-width="2.2"/></svg>
<svg style="left:2631px;top:196px;" width="31" height="32" viewBox="0 0 31 32"><circle cx="18.5" cy="13" r="11.5" stroke="#ececec" stroke-width="2.2" fill="none"/><path d="M10 21.5L1 30.5" stroke="#ececec" stroke-width="2.6"/><path d="M13 13H24" stroke="#ececec" stroke-width="2.2"/></svg>
<span class="t" style="left:2680.53px;top:200.65px;font-size:25px;line-height:25px;color:#ececec;transform-origin:0 0;transform:scaleX(0.8528);">25 %</span>
<svg style="left:2765.0px;top:202.0px;" width="14" height="20" viewBox="0 0 14 20"><path d="M0 8L7.0 0L14 8Z M0 12H14L7.0 20Z" fill="#a4a4a4"/></svg>
<svg style="left:2799px;top:196px;" width="31" height="32" viewBox="0 0 31 32"><circle cx="18.5" cy="13" r="11.5" stroke="#ececec" stroke-width="2.2" fill="none"/><path d="M10 21.5L1 30.5" stroke="#ececec" stroke-width="2.6"/><path d="M13.5 8L23.5 18M23.5 8L13.5 18" stroke="#ececec" stroke-width="2"/><path d="M12.5 7H16M12.5 7V10.5M24.5 7H21M24.5 7V10.5M12.5 19H16M12.5 19V15.5M24.5 19H21M24.5 19V15.5" stroke="#ececec" stroke-width="1.6" fill="none"/></svg>
<svg style="left:2847px;top:196px;" width="31" height="32" viewBox="0 0 31 32"><circle cx="18.5" cy="13" r="11.5" stroke="#ececec" stroke-width="2.2" fill="none"/><path d="M10 21.5L1 30.5" stroke="#ececec" stroke-width="2.6"/><path d="M13 10.5V7.5H16.5M20.5 7.5H24V10.5M24 15.5V18.5H20.5M16.5 18.5H13V15.5" stroke="#ececec" stroke-width="2.4" fill="none"/></svg>
<svg style="left:2899px;top:201px;" width="22" height="22" viewBox="0 0 22 22"><path d="M5 8A8.5 8.5 0 1 1 4.5 16.5" stroke="#a8a8a8" stroke-width="2.2" fill="none"/><path d="M2 2.500L10 9L2.5 11Z" fill="#a8a8a8"/></svg>
<div style="left:824px;top:235px;width:2092px;height:179px;background:#262626;"></div>
<div style="left:2916px;top:235px;width:20px;height:1429px;background:#1b1b1b;"></div>
<div style="left:824px;top:414px;width:2092px;height:1230px;background:#ffffff;background:repeating-conic-gradient(#dcdcdc 0% 25%,#ffffff 0% 50%) 2px 0/20px 20px;"></div>
<div style="left:824px;top:412px;width:2092px;height:2px;background:#1e1e1e;"></div>
<div style="left:2916px;top:890px;width:20px;height:393px;background:#595b5c;"></div>
<div style="left:824px;top:1644px;width:2092px;height:20px;background:#1b1b1b;"></div>
<div style="left:1942px;top:1644px;width:870px;height:19px;background:#595b5c;"></div>
<div style="left:2936px;top:142px;width:2px;height:2206px;background:#464646;"></div>
<div style="left:848.5px;top:807.5px;width:647px;height:365px;background:#ffffff;border:1.6px solid #e02226;border-radius:6px;box-sizing:border-box;"></div>
<div style="left:850px;top:812px;width:640.5px;height:359.5px;background:#e02226;border-radius:4px 3px 0 0;"></div>
<div style="left:1950.5px;top:808.5px;width:641.0px;height:360.5px;background:#e02226;box-shadow:0 0 0 1.2px #d3299a;"></div>
<div style="left:1950px;top:772px;width:198px;height:36px;background:#d3299a;border-radius:3px 0 0 0;"></div>
<svg style="left:1957px;top:779px;" width="20" height="20" viewBox="0 0 20 20"><path d="M10.0 0V20M0 10.0H20" stroke="#ecdce6" stroke-width="3.2" fill="none"/></svg>
<span class="t" style="left:1986.96px;top:779.00px;font-size:24px;line-height:24px;color:#f0e4ec;transform-origin:0 0;transform:scaleX(1.0483);">myFlowItem1</span>
<div style="left:1945.5px;top:803.5px;width:10.5px;height:10.5px;background:#ffffff;border:1.2px solid #d3299a;box-sizing:border-box;"></div>
<div style="left:1945.5px;top:983.5px;width:10.5px;height:10.5px;background:#ffffff;border:1.2px solid #d3299a;box-sizing:border-box;"></div>
<div style="left:1945.5px;top:1163.8px;width:10.5px;height:10.5px;background:#ffffff;border:1.2px solid #d3299a;box-sizing:border-box;"></div>
<div style="left:2265.5px;top:803.5px;width:10.5px;height:10.5px;background:#ffffff;border:1.2px solid #d3299a;box-sizing:border-box;"></div>
<div style="left:2265.5px;top:1163.8px;width:10.5px;height:10.5px;background:#ffffff;border:1.2px solid #d3299a;box-sizing:border-box;"></div>
<div style="left:2586px;top:803.5px;width:10.5px;height:10.5px;background:#ffffff;border:1.2px solid #d3299a;box-sizing:border-box;"></div>
<div style="left:2586px;top:983.5px;width:10.5px;height:10.5px;background:#ffffff;border:1.2px solid #d3299a;box-sizing:border-box;"></div>
<div style="left:2586px;top:1163.8px;width:10.5px;height:10.5px;background:#ffffff;border:1.2px solid #d3299a;box-sizing:border-box;"></div>
<span class="t" style="left:910.16px;top:886.05px;font-size:203px;line-height:203px;color:#000000;transform-origin:0 0;transform:scaleX(0.9244);-webkit-text-stroke:1.2px #000000;">State</span>
<svg style="left:1340px;top:910px;" width="70" height="155" viewBox="0 0 70 155"><path d="M64.0 8.0L45.0 8.0L9.3 34.0L9.3 51.6L47.1 28.1L47.1 148.3L64.0 148.3Z" fill="#000" stroke="#000" stroke-width="1.6" stroke-linejoin="round"/></svg>
<span class="t" style="left:2010.96px;top:883.45px;font-size:203px;line-height:203px;color:#000000;transform-origin:0 0;transform:scaleX(0.9244);-webkit-text-stroke:1.2px #000000;">State</span>
<svg style="left:2440.8px;top:907.4px;" width="70" height="155" viewBox="0 0 70 155"><path d="M64.0 8.0L45.0 8.0L9.3 34.0L9.3 51.6L47.1 28.1L47.1 148.3L64.0 148.3Z" fill="#000" stroke="#000" stroke-width="1.6" stroke-linejoin="round"/></svg>
<svg style="left:1500px;top:960px;" width="450" height="60" viewBox="0 0 450 60"><path d="M17 28.5H434" stroke="#e02226" stroke-width="1.8"/><circle cx="11" cy="28.5" r="5.2" stroke="#e02226" stroke-width="1.8" fill="#ffffff"/><path d="M418 12.5L435 28.5L418 45.5" stroke="#e02226" stroke-width="1.8" fill="none"/></svg>
<div style="left:2938px;top:144px;width:186px;height:40px;background:#dadada;"></div>
<div style="left:2938px;top:184px;width:900px;height:4px;background:#dadada;"></div>
<span class="t" style="left:2957.61px;top:152.30px;font-size:26px;line-height:26px;color:#1c1c1c;transform-origin:0 0;transform:scaleX(0.9587);">Properties</span>
<svg style="left:3086px;top:156px;" width="20" height="20" viewBox="0 0 20 20"><path d="M1 1L19 19M19 1L1 19" stroke="#1c1c1c" stroke-width="2.2" fill="none" stroke-linecap="square"/></svg>
<svg style="left:3731px;top:159px;" width="26" height="14" viewBox="0 0 26 14"><path d="M1 1L13.0 13L25 1" stroke="#dcdcdc" stroke-width="2.2" fill="none"/></svg>
<svg style="left:3768px;top:152px;" width="29" height="25" viewBox="0 0 29 25"><path d="M15.5 5H7Q1.2 5 1.2 11V18Q1.2 23.8 7 23.8H16Q21.8 23.8 21.8 18V12.5" stroke="#dcdcdc" stroke-width="2.2" fill="none"/><rect x="17.5" y="1.2" width="9.5" height="9" rx="1.5" stroke="#dcdcdc" stroke-width="2.2" fill="none"/></svg>
<svg style="left:3810px;top:155px;" width="20" height="20" viewBox="0 0 20 20"><path d="M1 1L19 19M19 1L1 19" stroke="#dcdcdc" stroke-width="2.2" fill="none" stroke-linecap="square"/></svg>
<div style="left:2938px;top:188px;width:900px;height:38px;background:#191919;"></div>
<svg style="left:2946.5px;top:203.0px;" width="15.0" height="7.5" viewBox="0 0 15.0 7.5"><path d="M0 0H15.0L7.5 7.5Z" fill="#a0a0a0"/></svg>
<span class="t" style="left:2983.14px;top:194.10px;font-size:26px;line-height:26px;color:#ececec;transform-origin:0 0;transform:scaleX(0.8846);">Type</span>
<span class="t" style="left:2955.14px;top:243.30px;font-size:26px;line-height:26px;color:#ececec;transform-origin:0 0;transform:scaleX(0.8846);">Type</span>
<div style="left:3272px;top:234px;width:488px;height:44px;background:#363636;"></div>
<span class="t" style="left:3279.54px;top:242.30px;font-size:26px;line-height:26px;color:#ececec;transform-origin:0 0;transform:scaleX(0.9885);">MyFlowItem</span>
<span class="t" style="left:2953.91px;top:295.80px;font-size:26px;line-height:26px;color:#ececec;transform-origin:0 0;">id</span>
<div style="left:3272px;top:286px;width:488px;height:44px;background:#242424;border:2px solid #3d3d3d;box-sizing:border-box;"></div>
<span class="t" style="left:3279.95px;top:295.30px;font-size:26px;line-height:26px;color:#ececec;transform-origin:0 0;transform:scaleX(0.9742);">myFlowItem1</span>
<svg style="left:3770px;top:290px;" width="35" height="35" viewBox="0 0 35 35"><path d="M8 5.5A15.5 15.5 0 1 1 8 29.5" stroke="#f0f0f0" stroke-width="2.3" fill="none"/><path d="M26 17.5H10" stroke="#f0f0f0" stroke-width="3"/><path d="M14 11.5L4.5 17.5L14 23.5Z" fill="#f0f0f0"/></svg>
<span class="t" style="left:2954.38px;top:348.30px;font-size:26px;line-height:26px;color:#ececec;transform-origin:0 0;transform:scaleX(0.9368);">Custom id</span>
<div style="left:3272px;top:338px;width:488px;height:44px;background:#242424;border:2px solid #3d3d3d;box-sizing:border-box;"></div>
<span class="t" style="left:3442.60px;top:347.57px;font-size:24.5px;line-height:24.5px;color:#ececec;transform-origin:0 0;transform:scaleX(0.8916);">Add Annotation</span>
<div style="left:2938px;top:390px;width:900px;height:40px;background:#191919;"></div>
<svg style="left:2946.5px;top:406.0px;" width="15.0" height="7.5" viewBox="0 0 15.0 7.5"><path d="M0 0H15.0L7.5 7.5Z" fill="#a0a0a0"/></svg>
<span class="t" style="left:2982.39px;top:397.10px;font-size:26px;line-height:26px;color:#ececec;transform-origin:0 0;transform:scaleX(0.9287);">Geometry</span>
<span class="t" style="left:2953.59px;top:448.30px;font-size:26px;line-height:26px;color:#ececec;transform-origin:0 0;transform:scaleX(0.9677);">Position</span>
<span class="t" style="left:3272.08px;top:448.30px;font-size:26px;line-height:26px;color:#ececec;transform-origin:0 0;transform:scaleX(0.7940);">X</span>
<span class="t" style="left:3521.08px;top:448.30px;font-size:26px;line-height:26px;color:#ececec;transform-origin:0 0;transform:scaleX(0.7940);">Y</span>
<div style="left:3346px;top:438px;width:150px;height:44px;background:#242424;border:2px solid #3d3d3d;box-sizing:border-box;"></div>
<div style="left:3377px;top:438px;width:2px;height:44px;background:#3d3d3d;"></div>
<svg style="left:3353px;top:446.0px;" width="20" height="28" viewBox="0 0 20 28"><path d="M1 10.5L10 1.5L19 10.5M1 17.5L10 26.5L19 17.5" stroke="#dcdcdc" stroke-width="1.8" fill="none"/></svg>
<span class="t" style="left:3474.62px;top:448.30px;font-size:26px;line-height:26px;color:#ececec;transform-origin:0 0;transform:scaleX(0.9455);">0</span>
<div style="left:3594px;top:438px;width:150px;height:44px;background:#242424;border:2px solid #3d3d3d;box-sizing:border-box;"></div>
<div style="left:3625px;top:438px;width:2px;height:44px;background:#3d3d3d;"></div>
<svg style="left:3601px;top:446.0px;" width="20" height="28" viewBox="0 0 20 28"><path d="M1 10.5L10 1.5L19 10.5M1 17.5L10 26.5L19 17.5" stroke="#dcdcdc" stroke-width="1.8" fill="none"/></svg>
<span class="t" style="left:3721.62px;top:448.30px;font-size:26px;line-height:26px;color:#ececec;transform-origin:0 0;transform:scaleX(0.9455);">0</span>
<span class="t" style="left:2954.59px;top:500.30px;font-size:26px;line-height:26px;color:#ececec;transform-origin:0 0;transform:scaleX(0.8667);">Size</span>
<span class="t" style="left:3272.48px;top:500.30px;font-size:26px;line-height:26px;color:#ececec;transform-origin:0 0;transform:scaleX(0.8968);">W</span>
<span class="t" style="left:3519.49px;top:500.30px;font-size:26px;line-height:26px;color:#ececec;transform-origin:0 0;transform:scaleX(1.0165);">H</span>
<div style="left:3346px;top:490px;width:150px;height:44px;background:#242424;border:2px solid #3d3d3d;box-sizing:border-box;"></div>
<div style="left:3377px;top:490px;width:2px;height:44px;background:#3d3d3d;"></div>
<svg style="left:3353px;top:498.0px;" width="20" height="28" viewBox="0 0 20 28"><path d="M1 10.5L10 1.5L19 10.5M1 17.5L10 26.5L19 17.5" stroke="#dcdcdc" stroke-width="1.8" fill="none"/></svg>
<span class="t" style="left:3424.69px;top:500.30px;font-size:26px;line-height:26px;color:#ececec;transform-origin:0 0;transform:scaleX(0.9784);">1.280</span>
<div style="left:3594px;top:490px;width:150px;height:44px;background:#242424;border:2px solid #3d3d3d;box-sizing:border-box;"></div>
<div style="left:3625px;top:490px;width:2px;height:44px;background:#3d3d3d;"></div>
<svg style="left:3601px;top:498.0px;" width="20" height="28" viewBox="0 0 20 28"><path d="M1 10.5L10 1.5L19 10.5M1 17.5L10 26.5L19 17.5" stroke="#dcdcdc" stroke-width="1.8" fill="none"/></svg>
<span class="t" style="left:3693.34px;top:500.30px;font-size:26px;line-height:26px;color:#ececec;transform-origin:0 0;transform:scaleX(0.9688);">720</span>
<div style="left:2938px;top:542px;width:900px;height:40px;background:#191919;"></div>
<svg style="left:2946.5px;top:558.0px;" width="15.0" height="7.5" viewBox="0 0 15.0 7.5"><path d="M0 0H15.0L7.5 7.5Z" fill="#a0a0a0"/></svg>
<span class="t" style="left:2983.48px;top:549.10px;font-size:26px;line-height:26px;color:#ececec;transform-origin:0 0;transform:scaleX(0.9514);">Visibility</span>
<span class="t" style="left:2955.48px;top:600.30px;font-size:26px;line-height:26px;color:#ececec;transform-origin:0 0;transform:scaleX(0.9514);">Visibility</span>
<div style="left:3314px;top:590px;width:44px;height:44px;background:#242424;border:2px solid #3d3d3d;box-sizing:border-box;"></div>
<svg style="left:3323px;top:600px;" width="26" height="24" viewBox="0 0 26 24"><path d="M2 12.5L9.5 20L24 3" stroke="#ffffff" stroke-width="4.4" fill="none"/></svg>
<span class="t" style="left:3371.42px;top:600.30px;font-size:26px;line-height:26px;color:#ececec;transform-origin:0 0;transform:scaleX(0.9335);">Is visible</span>
<div style="left:3544px;top:590px;width:44px;height:44px;background:#242424;border:2px solid #3d3d3d;box-sizing:border-box;"></div>
<svg style="left:3553px;top:600px;" width="26" height="24" viewBox="0 0 26 24"><path d="M2 12.5L9.5 20L24 3" stroke="#ffffff" stroke-width="4.4" fill="none"/></svg>
<span class="t" style="left:3601.44px;top:600.30px;font-size:26px;line-height:26px;color:#ececec;transform-origin:0 0;transform:scaleX(0.8919);">Clip</span>
<span class="t" style="left:2954.53px;top:652.30px;font-size:26px;line-height:26px;color:#ececec;transform-origin:0 0;transform:scaleX(0.9176);">Opacity</span>
<div style="left:3314px;top:642px;width:150px;height:44px;background:#242424;border:2px solid #3d3d3d;box-sizing:border-box;"></div>
<div style="left:3345px;top:642px;width:2px;height:44px;background:#3d3d3d;"></div>
<div style="left:3420px;top:642px;width:2px;height:44px;background:#3d3d3d;"></div>
<svg style="left:3323px;top:650px;" width="16" height="28" viewBox="0 0 16 28"><path d="M1.5 10L8 2.500L14.5 10" stroke="#6a6a6a" stroke-width="1.7" fill="none"/><path d="M1.5 18L8 25.500L14.5 18" stroke="#c8c8c8" stroke-width="1.7" fill="none"/></svg>
<span class="t" style="left:3365.77px;top:652.30px;font-size:26px;line-height:26px;color:#ececec;transform-origin:0 0;transform:scaleX(0.9390);">1,00</span>
<svg style="left:3429px;top:657px;" width="26" height="14" viewBox="0 0 26 14"><path d="M1 1.500L13 12L25 1.5" stroke="#c8c8c8" stroke-width="1.7" fill="none"/></svg>
<div style="left:2938px;top:702px;width:301px;height:44px;background:#dadada;"></div>
<div style="left:3239px;top:702px;width:599px;height:44px;background:#111111;"></div>
<div style="left:2938px;top:746px;width:900px;height:8px;background:#dadada;"></div>
<span class="t" style="left:3018.54px;top:712.30px;font-size:26px;line-height:26px;color:#1c1c1c;transform-origin:0 0;transform:scaleX(0.9885);">MyFlowItem</span>
<span class="t" style="left:3350.63px;top:712.30px;font-size:26px;line-height:26px;color:#ececec;transform-origin:0 0;transform:scaleX(0.9474);">Layout</span>
<span class="t" style="left:3637.60px;top:712.30px;font-size:26px;line-height:26px;color:#ececec;transform-origin:0 0;transform:scaleX(0.9115);">Advanced</span>
<div style="left:2938px;top:754px;width:900px;height:40px;background:#191919;"></div>
<svg style="left:2946.5px;top:770.0px;" width="15.0" height="7.5" viewBox="0 0 15.0 7.5"><path d="M0 0H15.0L7.5 7.5Z" fill="#a0a0a0"/></svg>
<span class="t" style="left:2981.58px;top:761.10px;font-size:26px;line-height:26px;color:#ececec;transform-origin:0 0;transform:scaleX(0.9712);">Flow Item</span>
<span class="t" style="left:2954.53px;top:812.30px;font-size:26px;line-height:26px;color:#ececec;transform-origin:0 0;transform:scaleX(0.9163);">State Change Target</span>
<svg style="left:3283px;top:812px;" width="23" height="23" viewBox="0 0 23 23"><g stroke="#1b94cf" stroke-width="2.8" fill="none"><rect x="9.5" y="1.5" width="9" height="13" rx="4" transform="rotate(28 14 8)"/><rect x="3.5" y="8.5" width="9" height="13" rx="4" transform="rotate(28 8 15)"/></g></svg>
<div style="left:3314px;top:802px;width:484px;height:44px;background:#242424;border:2px solid #3d3d3d;box-sizing:border-box;"></div>
<div style="left:3754px;top:802px;width:2px;height:44px;background:#3d3d3d;"></div>
<svg style="left:3764.0px;top:817.0px;" width="26" height="14" viewBox="0 0 26 14"><path d="M1 1.5L13 12L25 1.5" stroke="#c8c8c8" stroke-width="1.7" fill="none"/></svg>
<span class="t" style="left:3320.92px;top:812.30px;font-size:26px;line-height:26px;color:#1b94cf;transform-origin:0 0;transform:scaleX(0.9930);">myFlowItem</span>
<span class="t" style="left:2955.11px;top:864.30px;font-size:26px;line-height:26px;color:#ececec;transform-origin:0 0;transform:scaleX(0.9375);">Target State</span>
<div style="left:3314px;top:854px;width:484px;height:44px;background:#242424;border:2px solid #3d3d3d;box-sizing:border-box;"></div>
<div style="left:3754px;top:854px;width:2px;height:44px;background:#3d3d3d;"></div>
<svg style="left:3764.0px;top:869.0px;" width="26" height="14" viewBox="0 0 26 14"><path d="M1 1.5L13 12L25 1.5" stroke="#c8c8c8" stroke-width="1.7" fill="none"/></svg>
<span class="t" style="left:3321.46px;top:864.30px;font-size:26px;line-height:26px;color:#1b94cf;transform-origin:0 0;transform:scaleX(0.9743);">State2</span>
<span class="t" style="left:2953.70px;top:916.30px;font-size:26px;line-height:26px;color:#ececec;transform-origin:0 0;transform:scaleX(0.9133);">Loader Source</span>
<div style="left:3314px;top:906px;width:430px;height:44px;background:#242424;border:2px solid #3d3d3d;box-sizing:border-box;"></div>
<div style="left:3700px;top:906px;width:2px;height:44px;background:#3d3d3d;"></div>
<svg style="left:3710.0px;top:921.0px;" width="26" height="14" viewBox="0 0 26 14"><path d="M1 1.5L13 12L25 1.5" stroke="#c8c8c8" stroke-width="1.7" fill="none"/></svg>
<span class="t" style="left:3320.57px;top:916.30px;font-size:26px;line-height:26px;color:#e8e8e8;transform-origin:0 0;transform:scaleX(0.9759);">MyFlowItem.ui.qml</span>
<div style="left:3754px;top:906px;width:44px;height:44px;background:#242424;border:2px solid #3d3d3d;box-sizing:border-box;"></div>
<svg style="left:3765px;top:917px;" width="22" height="22" viewBox="0 0 22 22"><circle cx="11" cy="11" r="10.5" fill="#ffffff"/><path d="M11 4.500V17.500M4.5 11H17.5" stroke="#1e1e1e" stroke-width="3.2"/></svg>
<div style="left:2938px;top:958px;width:900px;height:40px;background:#191919;"></div>
<svg style="left:2946.5px;top:974.0px;" width="15.0" height="7.5" viewBox="0 0 15.0 7.5"><path d="M0 0H15.0L7.5 7.5Z" fill="#a0a0a0"/></svg>
<span class="t" style="left:2981.63px;top:965.10px;font-size:26px;line-height:26px;color:#ececec;transform-origin:0 0;transform:scaleX(0.9469);">Flow View</span>
<span class="t" style="left:2955.25px;top:1017.30px;font-size:26px;line-height:26px;color:#ececec;transform-origin:0 0;transform:scaleX(0.8974);">Join Connections</span>
<div style="left:3314px;top:1006px;width:44px;height:44px;background:#242424;border:2px solid #3d3d3d;box-sizing:border-box;"></div>
<svg style="left:3240px;top:880px;" width="60" height="340" viewBox="0 0 60 340"><path d="M20 324L30.5 30" stroke="#e8432c" stroke-width="5.4"/><path d="M31.5 10L43.5 36L19.5 35Z" fill="#e8432c"/></svg>
<span class="t" style="left:3009.40px;top:1237.10px;font-size:60px;line-height:60px;color:#ea5441;transform-origin:0 0;">Select the second instance</span>
<span class="t" style="left:3166.90px;top:1309.20px;font-size:60px;line-height:60px;color:#ea5441;transform-origin:0 0;">of the flow item</span>
<span class="t" style="left:3007.75px;top:1381.30px;font-size:60px;line-height:60px;color:#ea5441;transform-origin:0 0;">and using the state change</span>
<span class="t" style="left:3075.25px;top:1453.40px;font-size:60px;line-height:60px;color:#ea5441;transform-origin:0 0;">target and target state</span>
<span class="t" style="left:3020.20px;top:1525.50px;font-size:60px;line-height:60px;color:#ea5441;transform-origin:0 0;">to set the second instance</span>
<span class="t" style="left:3013.60px;top:1597.60px;font-size:60px;line-height:60px;color:#ea5441;transform-origin:0 0;">to state 2. Now run the live</span>
<span class="t" style="left:3026.05px;top:1669.70px;font-size:60px;line-height:60px;color:#ea5441;transform-origin:0 0;">preview and the transition</span>
<span class="t" style="left:3050.35px;top:1741.80px;font-size:60px;line-height:60px;color:#ea5441;transform-origin:0 0;">should go between both</span>
<span class="t" style="left:3281.35px;top:1813.90px;font-size:60px;line-height:60px;color:#ea5441;transform-origin:0 0;">states.</span>
<div style="left:78px;top:1664px;width:2858px;height:2px;background:#444444;"></div>
<div style="left:78px;top:1666px;width:2856px;height:40px;background:#27282a;"></div>
<div style="left:78px;top:1666px;width:142px;height:40px;background:#dadada;"></div>
<div style="left:78px;top:1706px;width:2186px;height:4px;background:#dadada;"></div>
<span class="t" style="left:96.98px;top:1674.30px;font-size:26px;line-height:26px;color:#1c1c1c;transform-origin:0 0;transform:scaleX(0.9535);">States</span>
<svg style="left:182px;top:1678px;" width="20" height="20" viewBox="0 0 20 20"><path d="M1 1L19 19M19 1L1 19" stroke="#1c1c1c" stroke-width="2.2" fill="none" stroke-linecap="square"/></svg>
<svg style="left:2154px;top:1681px;" width="26" height="14" viewBox="0 0 26 14"><path d="M1 1L13.0 13L25 1" stroke="#dcdcdc" stroke-width="2.2" fill="none"/></svg>
<svg style="left:2191px;top:1674px;" width="29" height="25" viewBox="0 0 29 25"><path d="M15.5 5H7Q1.2 5 1.2 11V18Q1.2 23.8 7 23.8H16Q21.8 23.8 21.8 18V12.5" stroke="#dcdcdc" stroke-width="2.2" fill="none"/><rect x="17.5" y="1.2" width="9.5" height="9" rx="1.5" stroke="#dcdcdc" stroke-width="2.2" fill="none"/></svg>
<svg style="left:2233px;top:1677px;" width="20" height="20" viewBox="0 0 20 20"><path d="M1 1L19 19M19 1L1 19" stroke="#dcdcdc" stroke-width="2.2" fill="none" stroke-linecap="square"/></svg>
<div style="left:82px;top:1714px;width:528px;height:528px;background:#0492c9;"></div>
<div style="left:110px;top:1742px;width:472px;height:472px;background:#2f2f2f;border:4px solid #ffe800;box-sizing:border-box;"></div>
<div style="left:164px;top:1755px;width:264px;height:43px;background:#222222;border:2px solid #3c3c3c;box-sizing:border-box;"></div>
<span class="t" style="left:171.49px;top:1764.30px;font-size:26px;line-height:26px;color:#e8e8e8;transform-origin:0 0;transform:scaleX(0.9502);">base state</span>
<span class="t" style="left:462.83px;top:1761.95px;font-size:27px;line-height:27px;color:#f0f0f0;transform-origin:0 0;font-style:italic;transform:scaleX(0.9484);">Default</span>
<div style="left:114px;top:1806px;width:464px;height:4px;background:#b4b4b4;"></div>
<div style="left:176px;top:1840px;width:340px;height:340px;background:#414141;border:2px solid #b4b4b4;box-sizing:border-box;"></div>
<div style="left:178px;top:1842px;width:43px;height:24px;background:#e02226;"></div>
<span class="t" style="left:182.07px;top:1848.35px;font-size:13px;line-height:13px;color:#1a0000;transform-origin:0 0;transform:scaleX(0.9011);">State1</span>
<div style="left:2000px;top:1894px;width:248px;height:160px;background:#242424;border:2px solid #3a3a3a;box-sizing:border-box;"></div>
<span class="t" style="left:2022.18px;top:1961.30px;font-size:26px;line-height:26px;color:#f0f0f0;transform-origin:0 0;font-style:italic;transform:scaleX(0.9951);">Create New State</span>
<div style="left:2264px;top:1664px;width:2px;height:684px;background:#3c3c3c;"></div>
<div style="left:2266px;top:1666px;width:164px;height:40px;background:#dadada;"></div>
<div style="left:2266px;top:1706px;width:668px;height:4px;background:#dadada;"></div>
<span class="t" style="left:2286.11px;top:1674.30px;font-size:26px;line-height:26px;color:#1c1c1c;transform-origin:0 0;transform:scaleX(0.9503);">Timeline</span>
<svg style="left:2391px;top:1678px;" width="20" height="20" viewBox="0 0 20 20"><path d="M1 1L19 19M19 1L1 19" stroke="#1c1c1c" stroke-width="2.2" fill="none" stroke-linecap="square"/></svg>
<svg style="left:2827px;top:1681px;" width="26" height="14" viewBox="0 0 26 14"><path d="M1 1L13.0 13L25 1" stroke="#dcdcdc" stroke-width="2.2" fill="none"/></svg>
<svg style="left:2864px;top:1674px;" width="29" height="25" viewBox="0 0 29 25"><path d="M15.5 5H7Q1.2 5 1.2 11V18Q1.2 23.8 7 23.8H16Q21.8 23.8 21.8 18V12.5" stroke="#dcdcdc" stroke-width="2.2" fill="none"/><rect x="17.5" y="1.2" width="9.5" height="9" rx="1.5" stroke="#dcdcdc" stroke-width="2.2" fill="none"/></svg>
<svg style="left:2906px;top:1677px;" width="20" height="20" viewBox="0 0 20 20"><path d="M1 1L19 19M19 1L1 19" stroke="#dcdcdc" stroke-width="2.2" fill="none" stroke-linecap="square"/></svg>
<svg style="left:2285px;top:1729px;" width="26" height="26" viewBox="0 0 26 26"><path d="M13.0 0V26M0 13.0H26" stroke="#c8c8c8" stroke-width="5" fill="none"/></svg>
<div style="left:2266px;top:1930px;width:668px;height:180px;background:transparent;overflow:hidden;"></div>
<span class="t" style="left:2410.11px;top:1948.15px;font-size:25px;line-height:25px;color:#ececec;transform-origin:0 0;transform:scaleX(0.9827);">This file does not contain a timeline.</span>
<span class="t" style="left:2267.11px;top:2028.15px;font-size:25px;line-height:25px;color:#ececec;transform-origin:0 0;transform:scaleX(0.9788);clip-path:inset(0 0.4% 0 0);">To create an animation, add a timeline by clicking the + button</span>
<span class="t" style="left:2407.11px;top:2068.15px;font-size:25px;line-height:25px;color:#ececec;transform-origin:0 0;transform:scaleX(0.9871);">To edit the timeline settings, click </span>
<svg style="left:2776px;top:2067px;" width="28" height="27" viewBox="0 0 28 27"><rect x="0.5" y="0.5" width="27" height="26" rx="3" fill="#b8b8b8"/><path d="M7.5 3.5H20.5V12H7.5ZM7.5 15H20.5V23.5H7.5Z" fill="#262626"/><path d="M2.5 3.5H5V7H2.5ZM2.5 11.5H5V15H2.5ZM2.5 19.5H5V23H2.5ZM23 3.5H25.5V7H23ZM23 11.5H25.5V15H23ZM23 19.5H25.5V23H23Z" fill="#262626"/></svg>
<div style="left:2266px;top:2325px;width:662px;height:21px;background:#595b5c;"></div>
<svg style="left:94px;top:2364px;" width="22" height="22" viewBox="0 0 22 22"><rect x="1" y="1" width="20" height="20" stroke="#8c8c8c" stroke-width="2" fill="none"/><rect x="1" y="1" width="9.5" height="20" fill="#8c8c8c"/></svg>
<div style="left:142px;top:2354px;width:412px;height:42px;background:#262728;"></div>
<svg style="left:154px;top:2361px;" width="34" height="29" viewBox="0 0 34 29"><circle cx="17" cy="11.5" r="8.5" stroke="#9c9c9c" stroke-width="2.6" fill="none"/><path d="M10.5 18L1.5 26" stroke="#9c9c9c" stroke-width="3.2"/><path d="M23 23.5H32L27.5 27.5Z" fill="#9c9c9c"/></svg>
<span class="t" style="left:196.62px;top:2364.80px;font-size:26px;line-height:26px;color:#868686;transform-origin:0 0;transform:scaleX(0.9166);">Type to locate (</span>
<svg style="left:362.5px;top:2367px;" width="21" height="19.5" viewBox="0 0 21 19.5"><path d="M6.5 6.5H14.5V13H6.5ZM6.5 6.5V3.75A2.75 2.75 0 1 0 3.75 6.5ZM14.5 6.5H17.25A2.75 2.75 0 1 0 14.5 3.75ZM14.5 13V15.75A2.75 2.75 0 1 0 17.25 13ZM6.5 13H3.75A2.75 2.75 0 1 0 6.5 15.75Z" stroke="#868686" stroke-width="2" fill="none"/></svg>
<span class="t" style="left:386.89px;top:2364.80px;font-size:26px;line-height:26px;color:#868686;transform-origin:0 0;transform:scaleX(0.8232);">K)</span>
<div style="left:560px;top:2354px;width:2px;height:42px;background:#565656;"></div>
<span class="t" style="left:580.26px;top:2364.60px;font-size:26px;line-height:26px;color:#d8d8d8;transform-origin:0 0;transform:scaleX(0.6897);">1</span>
<span class="t" style="left:606.43px;top:2364.60px;font-size:26px;line-height:26px;color:#d8d8d8;transform-origin:0 0;transform:scaleX(0.9292);">Issues</span>
<span class="t" style="left:711.30px;top:2364.60px;font-size:26px;line-height:26px;color:#d8d8d8;transform-origin:0 0;">2</span>
<span class="t" style="left:739.53px;top:2364.60px;font-size:26px;line-height:26px;color:#d8d8d8;transform-origin:0 0;transform:scaleX(0.9173);">Search Results</span>
<span class="t" style="left:935.61px;top:2364.60px;font-size:26px;line-height:26px;color:#d8d8d8;transform-origin:0 0;transform:scaleX(0.9555);">3</span>
<span class="t" style="left:964.60px;top:2364.60px;font-size:26px;line-height:26px;color:#d8d8d8;transform-origin:0 0;transform:scaleX(0.9506);">Application Output</span>
<span class="t" style="left:1202.61px;top:2364.60px;font-size:26px;line-height:26px;color:#d8d8d8;transform-origin:0 0;transform:scaleX(0.9555);">5</span>
<span class="t" style="left:1229.53px;top:2364.60px;font-size:26px;line-height:26px;color:#d8d8d8;transform-origin:0 0;transform:scaleX(0.9125);">QML Debugger Console</span>
<span class="t" style="left:1519.22px;top:2364.60px;font-size:26px;line-height:26px;color:#d8d8d8;transform-origin:0 0;transform:scaleX(1.0587);">6</span>
<span class="t" style="left:1547.41px;top:2364.60px;font-size:26px;line-height:26px;color:#d8d8d8;transform-origin:0 0;transform:scaleX(0.9178);">General Messages</span>
<span class="t" style="left:1784.30px;top:2364.60px;font-size:26px;line-height:26px;color:#d8d8d8;transform-origin:0 0;">7</span>
<span class="t" style="left:1812.48px;top:2364.60px;font-size:26px;line-height:26px;color:#d8d8d8;transform-origin:0 0;transform:scaleX(0.9369);">Version Control</span>
<svg style="left:2019.0px;top:2367.0px;" width="12" height="18" viewBox="0 0 12 18"><path d="M0 7L6.0 0L12 7Z M0 11H12L6.0 18Z" fill="#b4b4b4"/></svg>
<div style="left:3730px;top:2354px;width:48px;height:43px;background:#101010;"></div>
<svg style="left:3740px;top:2361px;" width="28" height="22" viewBox="0 0 28 22"><path d="M18 5.500L23 0L28 5.500Z" fill="#c0c0c0"/><rect x="1" y="13.5" width="26" height="7.5" rx="3.5" stroke="#d0d0d0" stroke-width="2" fill="#101010"/><rect x="2.5" y="15" width="15" height="4.5" rx="2" fill="#777"/></svg>
<svg style="left:3804px;top:2364px;" width="22" height="22" viewBox="0 0 22 22"><rect x="1" y="1" width="20" height="20" stroke="#8a8a8a" stroke-width="2" fill="none"/><rect x="12" y="1" width="9" height="20" fill="#6c6c6c"/></svg>
<div style="left:0px;top:290px;width:4px;height:76px;background:#d0d0d0;"></div>
<div style="left:4px;top:290px;width:72px;height:76px;background:#000000;"></div>
<svg style="left:18px;top:156px;" width="38" height="38" viewBox="0 0 38 38"><rect x="0" y="0" width="9.5" height="9.5" fill="#b8b8b8"/><rect x="14" y="0" width="9.5" height="9.5" fill="#b8b8b8"/><rect x="28" y="0" width="9.5" height="9.5" fill="#b8b8b8"/><rect x="0" y="14" width="9.5" height="9.5" fill="#b8b8b8"/><rect x="14" y="14" width="9.5" height="9.5" fill="#b8b8b8"/><rect x="28" y="14" width="9.5" height="9.5" fill="#b8b8b8"/><rect x="0" y="28" width="9.5" height="9.5" fill="#b8b8b8"/><rect x="14" y="28" width="9.5" height="9.5" fill="#b8b8b8"/><rect x="28" y="28" width="9.5" height="9.5" fill="#b8b8b8"/></svg>
<svg style="left:18px;top:232px;" width="38" height="38" viewBox="0 0 38 38"><rect width="38" height="38" fill="#c4c4c4"/><path d="M8 11H29M8 16H26M8 21H29M8 26H24" stroke="#1e1e1e" stroke-width="2.2"/><path d="M8 30.500H26" stroke="#1e1e1e" stroke-width="2.2"/></svg>
<svg style="left:16px;top:308px;" width="40" height="40" viewBox="0 0 40 40"><path d="M0 40L3.5 29L30 2.500L37.5 10L11 36.500Z" fill="#c46200"/><path d="M30 2.500L33 0L40 7L37.5 10Z" fill="#c46200"/><path d="M27 6L34.5 13.5" stroke="#000" stroke-width="3.2"/></svg>
<svg style="left:17px;top:384px;" width="40" height="38" viewBox="0 0 40 38"><ellipse cx="20" cy="22" rx="13.5" ry="16" fill="#b8b8b8"/><path d="M10 9Q20 -4 30 9Z" fill="#b8b8b8"/><path d="M20 8V38" stroke="#1b1b1b" stroke-width="2.2"/><path d="M6.5 9.500Q20 16 33.5 9.5" stroke="#1b1b1b" stroke-width="2.2" fill="none"/><path d="M7 14L1 9M33 14L39 9M6 23H0M34 23H40M8 32L2 37M32 32L38 37" stroke="#b8b8b8" stroke-width="2.6"/></svg>
<svg style="left:18px;top:460px;" width="39" height="40" viewBox="0 0 39 40"><path d="M4 36L23.5 15.5" stroke="#b8b8b8" stroke-width="7.5" stroke-linecap="round"/><path d="M37.5 8.500A10 10 0 1 1 30 1.500L25 7.500L27 12L32 13.500Z" fill="#b8b8b8"/></svg>
<svg style="left:17px;top:536px;" width="41" height="41" viewBox="0 0 41 41"><circle cx="20.5" cy="20.5" r="20" fill="#b8b8b8"/></svg>
<span class="t" style="left:28.20px;top:541.05px;font-size:31px;line-height:31px;color:#1b1b1b;transform-origin:0 0;font-weight:bold;">?</span>
<div style="left:0px;top:2078px;width:76px;height:2px;background:#555555;"></div>
<svg style="left:14px;top:2106px;" width="58" height="50" viewBox="0 0 58 50"><rect x="2" y="2" width="44" height="31" rx="3" stroke="#b8b8b8" stroke-width="4" fill="#4a4a4a"/><path d="M20 35H28L35 47H13Z" fill="#b8b8b8"/><path d="M52 20L57 25L52 30Z" fill="#b8b8b8"/></svg>
<svg style="left:20px;top:2182px;" width="36" height="46" viewBox="0 0 36 46"><path d="M0 0L36 22.500L0 45Z" fill="#8fbd6b"/></svg>
<svg style="left:20px;top:2259px;" width="40" height="48" viewBox="0 0 40 48"><path d="M0 0L36 22.500L0 45Z" fill="#8fbd6b"/><ellipse cx="25" cy="35" rx="8" ry="10" fill="#e0e0e0" stroke="#1b1b1b" stroke-width="1.5"/><path d="M25 26V45" stroke="#1b1b1b" stroke-width="1.6"/><path d="M18 28L13 24M32 28L37 24M17 36H12M33 36H38M18 42L14 46M32 42L36 46" stroke="#e0e0e0" stroke-width="1.8"/><path d="M19.5 26.500Q25 19 30.5 26.500Z" fill="#e0e0e0"/></svg>
<svg style="left:16px;top:2334px;" width="46" height="44" viewBox="0 0 46 44"><path d="M3 41L27 17" stroke="#6e6e6e" stroke-width="6.5"/><path d="M20 8L29 0L45 15L39 21Z" fill="#6e6e6e"/></svg>
<div style="left:0px;top:58px;width:2px;height:2330px;background:#4a4a4a;"></div>
<div style="left:3836px;top:58px;width:2px;height:2330px;background:#444444;"></div>
<div style="left:0px;top:290px;width:4px;height:76px;background:#d0d0d0;"></div>
</body></html>
